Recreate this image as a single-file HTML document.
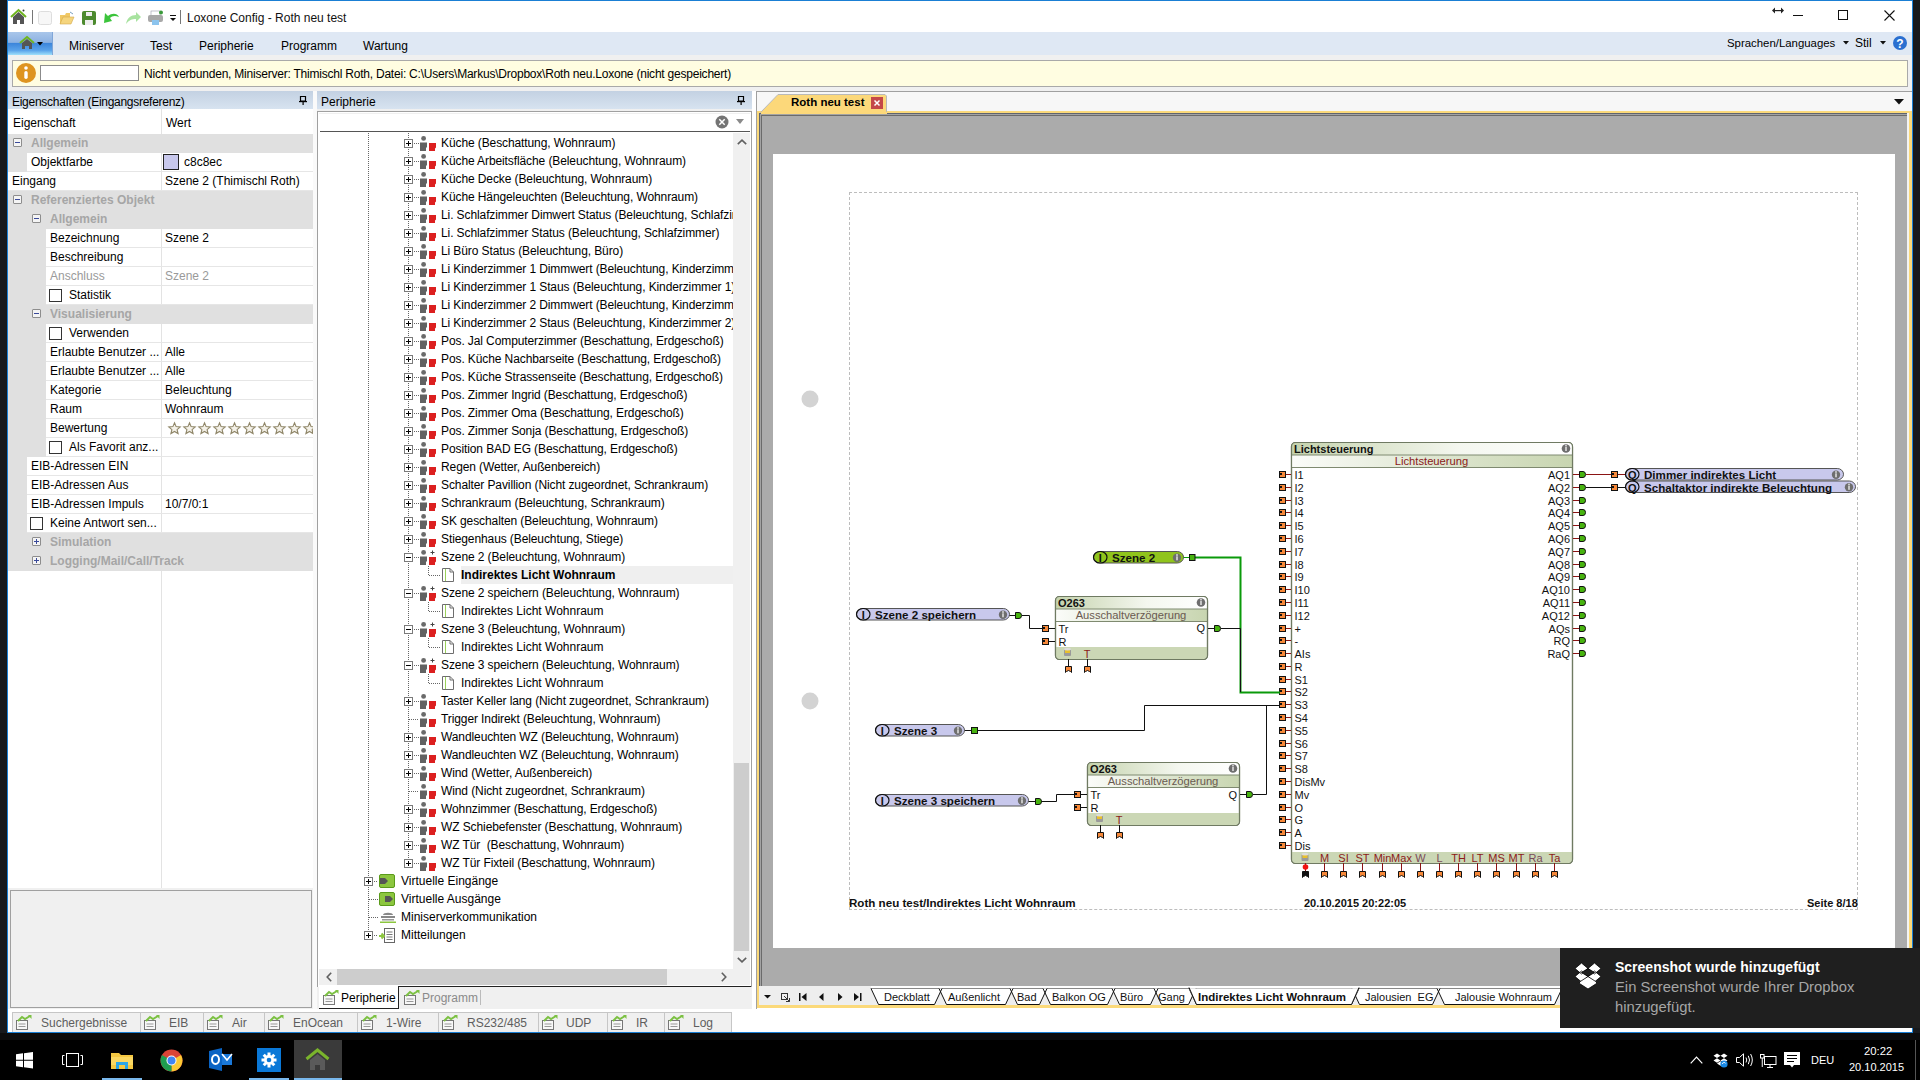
<!DOCTYPE html>
<html><head><meta charset="utf-8">
<style>
*{box-sizing:border-box;margin:0;padding:0}
html,body{width:1920px;height:1080px;overflow:hidden;background:#1c1c1c;font-family:"Liberation Sans",sans-serif;font-size:12px;color:#000}
.a{position:absolute}
.t{position:absolute;white-space:nowrap;line-height:14px}
svg{position:absolute;overflow:visible}
</style></head><body>
<!-- desktop strips -->
<div class="a" style="left:0;top:0;width:7px;height:1040px;background:#17191c"></div>
<div class="a" style="left:1913px;top:0;width:7px;height:1040px;background:#17191c"></div>
<!-- window bg -->
<div class="a" style="left:7px;top:0;width:1906px;height:1034px;background:#f0f0f0;border:1px solid #1a7fd4"></div>
<!-- title bar -->
<div class="a" style="left:8px;top:1px;width:1904px;height:31px;background:#fff"></div>
<!-- home icon -->
<svg style="left:10px;top:8px" width="17" height="17" viewBox="0 0 17 17"><path d="M1 9 L8.5 2 L16 9" fill="none" stroke="#6fb51f" stroke-width="2"/><path d="M3 9 L8.5 4 L14 9 V16 H10 V12 H7 V16 H3Z" fill="#555"/><circle cx="13.5" cy="2.5" r="1" fill="#333"/></svg>
<div class="a" style="left:32px;top:10px;width:1px;height:14px;background:#777"></div>
<svg style="left:38px;top:11px" width="14" height="14"><rect x="0.5" y="0.5" width="13" height="13" rx="2" fill="#f7f7f7" stroke="#ddd"/></svg>
<svg style="left:59px;top:11px" width="16" height="15"><path d="M1 4 H6 L7 2 H11 V13 H1Z" fill="#f0c865"/><path d="M1 13 L4 6 H15 L12 13Z" fill="#f5d57e" stroke="#d4a94a" stroke-width="0.6"/><path d="M11 1 L14 3" stroke="#7aa0c0" stroke-width="1"/></svg>
<svg style="left:82px;top:11px" width="14" height="14"><rect x="0" y="0" width="14" height="14" rx="2" fill="#4c8a2e"/><rect x="4" y="1" width="6" height="4" fill="#eee"/><rect x="3" y="9" width="8" height="5" fill="#eee"/></svg>
<svg style="left:103px;top:12px" width="17" height="12"><path d="M1 11 L2 1 L5 4 C9 1 14 1 16 5 C12 3 9 4 7 6 L9 9Z" fill="#3cc43c"/></svg>
<svg style="left:125px;top:11px" width="17" height="13"><path d="M1 13 C2 7 6 4 11 4 L11 1 L16 6 L11 11 L11 8 C7 8 4 9 1 13Z" fill="#a8e3a0"/></svg>
<svg style="left:148px;top:10px" width="16" height="16"><rect x="3" y="1" width="9" height="5" fill="#fff" stroke="#99a" stroke-width="0.6"/><rect x="0" y="5" width="15" height="7" rx="2" fill="#a8a8a8"/><rect x="4" y="10" width="7" height="5" fill="#8cc4ee"/><circle cx="13" cy="2.5" r="2" fill="#3a9a3a"/></svg>
<svg style="left:170px;top:15px" width="6" height="7"><rect x="0" y="0" width="6" height="1" fill="#111"/><path d="M0 3 H6 L3 6Z" fill="#111"/></svg>
<div class="a" style="left:180px;top:10px;width:1px;height:14px;background:#777"></div>
<div class="t" style="left:187px;top:11px;font-size:12px;color:#111">Loxone Config - Roth neu test</div>
<!-- window controls -->
<svg style="left:1772px;top:7px" width="12" height="7"><path d="M0 3.5 L3 0.5 V6.5Z M12 3.5 L9 0.5 V6.5Z" fill="#222"/><rect x="2" y="3" width="8" height="1.2" fill="#222"/></svg>
<div class="a" style="left:1793px;top:15px;width:10px;height:1px;background:#111"></div>
<div class="a" style="left:1838px;top:10px;width:10px;height:10px;border:1px solid #111"></div>
<svg style="left:1884px;top:10px" width="11" height="11"><path d="M0.5 0.5 L10.5 10.5 M10.5 0.5 L0.5 10.5" stroke="#111" stroke-width="1.1"/></svg>

<!-- ribbon bar -->
<div class="a" style="left:8px;top:32px;width:1904px;height:23px;background:#dfe8f4"></div>
<div class="a" style="left:8px;top:32px;width:45px;height:23px;background:linear-gradient(#a9c6ea 0%,#8db2e2 45%,#3d86db 50%,#5aa3ea 80%,#9fe0fb 100%);border-right:1px solid #7fa6d8"></div>
<svg style="left:19px;top:36px" width="16" height="14" viewBox="0 0 16 14"><path d="M1 7 L8 1 L15 7" fill="none" stroke="#6fb51f" stroke-width="2"/><path d="M3 7 L8 3 L13 7 V13 H10 V10 H6 V13 H3Z" fill="#555"/></svg>
<svg style="left:37px;top:42px" width="6" height="4"><path d="M0 0 H6 L3 3.5Z" fill="#000"/></svg>
<div class="t" style="left:69px;top:39px">Miniserver</div>
<div class="t" style="left:150px;top:39px">Test</div>
<div class="t" style="left:199px;top:39px">Peripherie</div>
<div class="t" style="left:281px;top:39px">Programm</div>
<div class="t" style="left:363px;top:39px">Wartung</div>
<div class="t" style="left:1727px;top:36px;font-size:11.4px">Sprachen/Languages</div>
<svg style="left:1843px;top:41px" width="6" height="4"><path d="M0 0 H6 L3 3.5Z" fill="#111"/></svg>
<div class="t" style="left:1855px;top:36px">Stil</div>
<svg style="left:1880px;top:41px" width="6" height="4"><path d="M0 0 H6 L3 3.5Z" fill="#111"/></svg>
<svg style="left:1893px;top:36px" width="14" height="14"><circle cx="7" cy="7" r="7" fill="#2a6fd0"/><text x="7" y="11.5" font-family="Liberation Sans" font-weight="bold" font-size="12" fill="#fff" text-anchor="middle">?</text></svg>

<!-- info bar -->
<div class="a" style="left:12px;top:60px;width:1896px;height:27px;background:#fffde1;border:1px solid #a9a9a9"></div>
<svg style="left:16px;top:63px" width="20" height="20"><circle cx="10" cy="10" r="10" fill="#de9420"/><circle cx="10" cy="5" r="1.8" fill="#fff"/><rect x="8.3" y="8" width="3.4" height="8" rx="1.7" fill="#fff"/></svg>
<div class="a" style="left:40px;top:65px;width:99px;height:16px;background:#fff;border:1px solid #8b8b8b"></div>
<div class="t" style="left:144px;top:67px;letter-spacing:-0.22px">Nicht verbunden, Miniserver: Thimischl Roth, Datei: C:\Users\Markus\Dropbox\Roth neu.Loxone (nicht gespeichert)</div>

<div class="a" style="left:8px;top:91px;width:305px;height:18px;background:linear-gradient(#c3d1e2,#d7e3f0)"></div>
<div class="t" style="left:12px;top:95px;letter-spacing:-0.28px">Eigenschaften (Eingangsreferenz)</div>
<svg style="left:299px;top:96px" width="8" height="9"><path d="M1.5 0.5 H6.5 V5 H1.5Z" fill="none" stroke="#000" stroke-width="1.2"/><rect x="0" y="5" width="8" height="1.2" fill="#000"/><rect x="3.5" y="6" width="1.2" height="3" fill="#000"/></svg>
<div class="a" style="left:8px;top:109px;width:305px;height:779px;background:#fff"></div>
<div class="a" style="left:161px;top:109px;width:1px;height:779px;background:#e3e3e3"></div>
<div class="t" style="left:13px;top:116px">Eigenschaft</div>
<div class="t" style="left:166px;top:116px">Wert</div>
<div class="a" style="left:8px;top:134px;width:305px;height:19px;background:#e0e0e0"></div>
<div class="a" style="left:13px;top:138px;width:9px;height:9px;border:1px solid #8d8d8d;border-radius:1px;background:#f4f4f4"></div>
<div class="a" style="left:15px;top:142px;width:5px;height:1px;background:#3a4a9a"></div>
<div class="t" style="left:31px;top:136px;color:#a6a6a6;font-weight:bold">Allgemein</div>
<div class="a" style="left:8px;top:153px;width:19px;height:19px;background:#e0e0e0"></div>
<div class="a" style="left:27px;top:171px;width:286px;height:1px;background:#e6e6e6"></div>
<div class="t" style="left:31px;top:155px;color:#000">Objektfarbe</div>
<div class="a" style="left:163px;top:154px;width:16px;height:16px;border:1px solid #222;background:#c8c8ec"></div>
<div class="t" style="left:184px;top:155px">c8c8ec</div>
<div class="a" style="left:8px;top:190px;width:305px;height:1px;background:#e6e6e6"></div>
<div class="t" style="left:12px;top:174px;color:#000">Eingang</div>
<div class="t" style="left:165px;top:174px;color:#000">Szene 2 (Thimischl Roth)</div>
<div class="a" style="left:8px;top:191px;width:305px;height:19px;background:#e0e0e0"></div>
<div class="a" style="left:13px;top:195px;width:9px;height:9px;border:1px solid #8d8d8d;border-radius:1px;background:#f4f4f4"></div>
<div class="a" style="left:15px;top:199px;width:5px;height:1px;background:#3a4a9a"></div>
<div class="t" style="left:31px;top:193px;color:#a6a6a6;font-weight:bold">Referenziertes Objekt</div>
<div class="a" style="left:8px;top:210px;width:305px;height:19px;background:#e0e0e0"></div>
<div class="a" style="left:32px;top:214px;width:9px;height:9px;border:1px solid #8d8d8d;border-radius:1px;background:#f4f4f4"></div>
<div class="a" style="left:34px;top:218px;width:5px;height:1px;background:#3a4a9a"></div>
<div class="t" style="left:50px;top:212px;color:#a6a6a6;font-weight:bold">Allgemein</div>
<div class="a" style="left:8px;top:229px;width:38px;height:19px;background:#e0e0e0"></div>
<div class="a" style="left:46px;top:247px;width:267px;height:1px;background:#e6e6e6"></div>
<div class="t" style="left:50px;top:231px;color:#000">Bezeichnung</div>
<div class="t" style="left:165px;top:231px;color:#000">Szene 2</div>
<div class="a" style="left:8px;top:248px;width:38px;height:19px;background:#e0e0e0"></div>
<div class="a" style="left:46px;top:266px;width:267px;height:1px;background:#e6e6e6"></div>
<div class="t" style="left:50px;top:250px;color:#000">Beschreibung</div>
<div class="a" style="left:8px;top:267px;width:38px;height:19px;background:#e0e0e0"></div>
<div class="a" style="left:46px;top:285px;width:267px;height:1px;background:#e6e6e6"></div>
<div class="t" style="left:50px;top:269px;color:#9a9a9a">Anschluss</div>
<div class="t" style="left:165px;top:269px;color:#9a9a9a">Szene 2</div>
<div class="a" style="left:8px;top:286px;width:38px;height:19px;background:#e0e0e0"></div>
<div class="a" style="left:46px;top:304px;width:267px;height:1px;background:#e6e6e6"></div>
<div class="a" style="left:49px;top:289px;width:13px;height:13px;border:1px solid #333;background:#fff"></div>
<div class="t" style="left:69px;top:288px;color:#000">Statistik</div>
<div class="a" style="left:8px;top:305px;width:305px;height:19px;background:#e0e0e0"></div>
<div class="a" style="left:32px;top:309px;width:9px;height:9px;border:1px solid #8d8d8d;border-radius:1px;background:#f4f4f4"></div>
<div class="a" style="left:34px;top:313px;width:5px;height:1px;background:#3a4a9a"></div>
<div class="t" style="left:50px;top:307px;color:#a6a6a6;font-weight:bold">Visualisierung</div>
<div class="a" style="left:8px;top:324px;width:38px;height:19px;background:#e0e0e0"></div>
<div class="a" style="left:46px;top:342px;width:267px;height:1px;background:#e6e6e6"></div>
<div class="a" style="left:49px;top:327px;width:13px;height:13px;border:1px solid #333;background:#fff"></div>
<div class="t" style="left:69px;top:326px;color:#000">Verwenden</div>
<div class="a" style="left:8px;top:343px;width:38px;height:19px;background:#e0e0e0"></div>
<div class="a" style="left:46px;top:361px;width:267px;height:1px;background:#e6e6e6"></div>
<div class="t" style="left:50px;top:345px;color:#000">Erlaubte Benutzer ...</div>
<div class="t" style="left:165px;top:345px;color:#000">Alle</div>
<div class="a" style="left:8px;top:362px;width:38px;height:19px;background:#e0e0e0"></div>
<div class="a" style="left:46px;top:380px;width:267px;height:1px;background:#e6e6e6"></div>
<div class="t" style="left:50px;top:364px;color:#000">Erlaubte Benutzer ...</div>
<div class="t" style="left:165px;top:364px;color:#000">Alle</div>
<div class="a" style="left:8px;top:381px;width:38px;height:19px;background:#e0e0e0"></div>
<div class="a" style="left:46px;top:399px;width:267px;height:1px;background:#e6e6e6"></div>
<div class="t" style="left:50px;top:383px;color:#000">Kategorie</div>
<div class="t" style="left:165px;top:383px;color:#000">Beleuchtung</div>
<div class="a" style="left:8px;top:400px;width:38px;height:19px;background:#e0e0e0"></div>
<div class="a" style="left:46px;top:418px;width:267px;height:1px;background:#e6e6e6"></div>
<div class="t" style="left:50px;top:402px;color:#000">Raum</div>
<div class="t" style="left:165px;top:402px;color:#000">Wohnraum</div>
<div class="a" style="left:8px;top:419px;width:38px;height:19px;background:#e0e0e0"></div>
<div class="a" style="left:46px;top:437px;width:267px;height:1px;background:#e6e6e6"></div>
<div class="t" style="left:50px;top:421px;color:#000">Bewertung</div>
<svg style="left:168px;top:422px" width="13" height="13" viewBox="0 0 13 13"><path d="M6.5 0.8 L8.1 4.6 L12.2 4.9 L9.1 7.6 L10.1 11.6 L6.5 9.5 L2.9 11.6 L3.9 7.6 L0.8 4.9 L4.9 4.6Z" fill="#f4f1e8" stroke="#8f8668" stroke-width="1.1"/></svg>
<svg style="left:183px;top:422px" width="13" height="13" viewBox="0 0 13 13"><path d="M6.5 0.8 L8.1 4.6 L12.2 4.9 L9.1 7.6 L10.1 11.6 L6.5 9.5 L2.9 11.6 L3.9 7.6 L0.8 4.9 L4.9 4.6Z" fill="#f4f1e8" stroke="#8f8668" stroke-width="1.1"/></svg>
<svg style="left:198px;top:422px" width="13" height="13" viewBox="0 0 13 13"><path d="M6.5 0.8 L8.1 4.6 L12.2 4.9 L9.1 7.6 L10.1 11.6 L6.5 9.5 L2.9 11.6 L3.9 7.6 L0.8 4.9 L4.9 4.6Z" fill="#f4f1e8" stroke="#8f8668" stroke-width="1.1"/></svg>
<svg style="left:213px;top:422px" width="13" height="13" viewBox="0 0 13 13"><path d="M6.5 0.8 L8.1 4.6 L12.2 4.9 L9.1 7.6 L10.1 11.6 L6.5 9.5 L2.9 11.6 L3.9 7.6 L0.8 4.9 L4.9 4.6Z" fill="#f4f1e8" stroke="#8f8668" stroke-width="1.1"/></svg>
<svg style="left:228px;top:422px" width="13" height="13" viewBox="0 0 13 13"><path d="M6.5 0.8 L8.1 4.6 L12.2 4.9 L9.1 7.6 L10.1 11.6 L6.5 9.5 L2.9 11.6 L3.9 7.6 L0.8 4.9 L4.9 4.6Z" fill="#f4f1e8" stroke="#8f8668" stroke-width="1.1"/></svg>
<svg style="left:243px;top:422px" width="13" height="13" viewBox="0 0 13 13"><path d="M6.5 0.8 L8.1 4.6 L12.2 4.9 L9.1 7.6 L10.1 11.6 L6.5 9.5 L2.9 11.6 L3.9 7.6 L0.8 4.9 L4.9 4.6Z" fill="#f4f1e8" stroke="#8f8668" stroke-width="1.1"/></svg>
<svg style="left:258px;top:422px" width="13" height="13" viewBox="0 0 13 13"><path d="M6.5 0.8 L8.1 4.6 L12.2 4.9 L9.1 7.6 L10.1 11.6 L6.5 9.5 L2.9 11.6 L3.9 7.6 L0.8 4.9 L4.9 4.6Z" fill="#f4f1e8" stroke="#8f8668" stroke-width="1.1"/></svg>
<svg style="left:273px;top:422px" width="13" height="13" viewBox="0 0 13 13"><path d="M6.5 0.8 L8.1 4.6 L12.2 4.9 L9.1 7.6 L10.1 11.6 L6.5 9.5 L2.9 11.6 L3.9 7.6 L0.8 4.9 L4.9 4.6Z" fill="#f4f1e8" stroke="#8f8668" stroke-width="1.1"/></svg>
<svg style="left:288px;top:422px" width="13" height="13" viewBox="0 0 13 13"><path d="M6.5 0.8 L8.1 4.6 L12.2 4.9 L9.1 7.6 L10.1 11.6 L6.5 9.5 L2.9 11.6 L3.9 7.6 L0.8 4.9 L4.9 4.6Z" fill="#f4f1e8" stroke="#8f8668" stroke-width="1.1"/></svg>
<svg style="left:303px;top:422px" width="13" height="13" viewBox="0 0 13 13"><path d="M6.5 0.8 L8.1 4.6 L12.2 4.9 L9.1 7.6 L10.1 11.6 L6.5 9.5 L2.9 11.6 L3.9 7.6 L0.8 4.9 L4.9 4.6Z" fill="#f4f1e8" stroke="#8f8668" stroke-width="1.1"/></svg>
<div class="a" style="left:8px;top:438px;width:38px;height:19px;background:#e0e0e0"></div>
<div class="a" style="left:46px;top:456px;width:267px;height:1px;background:#e6e6e6"></div>
<div class="a" style="left:49px;top:441px;width:13px;height:13px;border:1px solid #333;background:#fff"></div>
<div class="t" style="left:69px;top:440px;color:#000">Als Favorit anz...</div>
<div class="a" style="left:8px;top:457px;width:19px;height:19px;background:#e0e0e0"></div>
<div class="a" style="left:27px;top:475px;width:286px;height:1px;background:#e6e6e6"></div>
<div class="t" style="left:31px;top:459px;color:#000">EIB-Adressen EIN</div>
<div class="a" style="left:8px;top:476px;width:19px;height:19px;background:#e0e0e0"></div>
<div class="a" style="left:27px;top:494px;width:286px;height:1px;background:#e6e6e6"></div>
<div class="t" style="left:31px;top:478px;color:#000">EIB-Adressen Aus</div>
<div class="a" style="left:8px;top:495px;width:19px;height:19px;background:#e0e0e0"></div>
<div class="a" style="left:27px;top:513px;width:286px;height:1px;background:#e6e6e6"></div>
<div class="t" style="left:31px;top:497px;color:#000">EIB-Adressen Impuls</div>
<div class="t" style="left:165px;top:497px;color:#000">10/7/0:1</div>
<div class="a" style="left:8px;top:514px;width:19px;height:19px;background:#e0e0e0"></div>
<div class="a" style="left:27px;top:532px;width:286px;height:1px;background:#e6e6e6"></div>
<div class="a" style="left:30px;top:517px;width:13px;height:13px;border:1px solid #333;background:#fff"></div>
<div class="t" style="left:50px;top:516px;color:#000">Keine Antwort sen...</div>
<div class="a" style="left:8px;top:533px;width:305px;height:19px;background:#e0e0e0"></div>
<div class="a" style="left:32px;top:537px;width:9px;height:9px;border:1px solid #8d8d8d;border-radius:1px;background:#f4f4f4"></div>
<div class="a" style="left:34px;top:541px;width:5px;height:1px;background:#3a4a9a"></div>
<div class="a" style="left:36px;top:539px;width:1px;height:5px;background:#3a4a9a"></div>
<div class="t" style="left:50px;top:535px;color:#a6a6a6;font-weight:bold">Simulation</div>
<div class="a" style="left:8px;top:552px;width:305px;height:19px;background:#e0e0e0"></div>
<div class="a" style="left:32px;top:556px;width:9px;height:9px;border:1px solid #8d8d8d;border-radius:1px;background:#f4f4f4"></div>
<div class="a" style="left:34px;top:560px;width:5px;height:1px;background:#3a4a9a"></div>
<div class="a" style="left:36px;top:558px;width:1px;height:5px;background:#3a4a9a"></div>
<div class="t" style="left:50px;top:554px;color:#a6a6a6;font-weight:bold">Logging/Mail/Call/Track</div>
<div class="a" style="left:313px;top:91px;width:4px;height:920px;background:#fafafa"></div>
<div class="a" style="left:10px;top:890px;width:302px;height:118px;background:#f0f0f0;border:1px solid #a0a0a0"></div>
<div class="a" style="left:317px;top:91px;width:435px;height:18px;background:linear-gradient(#c3d1e2,#d7e3f0)"></div>
<div class="t" style="left:321px;top:95px">Peripherie</div>
<svg style="left:737px;top:96px" width="8" height="9"><path d="M1.5 0.5 H6.5 V5 H1.5Z" fill="none" stroke="#000" stroke-width="1.2"/><rect x="0" y="5" width="8" height="1.2" fill="#000"/><rect x="3.5" y="6" width="1.2" height="3" fill="#000"/></svg>
<div class="a" style="left:317px;top:111px;width:435px;height:876px;background:#fff;border:1px solid #a0a0a0;border-bottom:none"></div>
<div class="a" style="left:319px;top:113px;width:431px;height:19px;background:#fff;border-top:1px solid #f0f0f0"></div>
<div class="a" style="left:320px;top:131px;width:430px;height:1px;background:#555"></div>
<svg style="left:715px;top:115px" width="14" height="14"><circle cx="7" cy="7" r="6.5" fill="#747474"/><path d="M4.3 4.3 L9.7 9.7 M9.7 4.3 L4.3 9.7" stroke="#fff" stroke-width="1.5"/></svg>
<svg style="left:736px;top:119px" width="8" height="6"><path d="M0 0 H8 L4 5Z" fill="#8a8a8a"/></svg>
<div class="a" style="left:319px;top:133px;width:414px;height:835px;overflow:hidden">
<div class="a" style="left:49px;top:0px;width:1px;height:802px;background:repeating-linear-gradient(#666 0 1px,transparent 1px 2px)"></div>
<div class="a" style="left:89px;top:0px;width:1px;height:729px;background:repeating-linear-gradient(#666 0 1px,transparent 1px 2px)"></div>
<div class="a" style="left:95px;top:10px;width:5px;height:1px;background:repeating-linear-gradient(90deg,#666 0 1px,transparent 1px 2px)"></div>
<div class="a" style="left:85px;top:6px;width:9px;height:9px;border:1px solid #7a7a7a;background:#fff"></div><div class="a" style="left:87px;top:10px;width:5px;height:1px;background:#000"></div><div class="a" style="left:89px;top:8px;width:1px;height:5px;background:#000"></div>
<svg style="left:101px;top:3px" width="17" height="16"><circle cx="3.6" cy="2.4" r="2.4" fill="#6a6a6a"/><path d="M0 6.5 H7 V11 L6 12 V15 H0Z" fill="#626262"/><path d="M9 7 H16 V11.5 L15 12.5 V15 H9Z" fill="#dc1f1f"/></svg>
<div class="t" style="left:122px;top:3px;letter-spacing:-0.1px">Küche (Beschattung, Wohnraum)</div>
<div class="a" style="left:95px;top:28px;width:5px;height:1px;background:repeating-linear-gradient(90deg,#666 0 1px,transparent 1px 2px)"></div>
<div class="a" style="left:85px;top:24px;width:9px;height:9px;border:1px solid #7a7a7a;background:#fff"></div><div class="a" style="left:87px;top:28px;width:5px;height:1px;background:#000"></div><div class="a" style="left:89px;top:26px;width:1px;height:5px;background:#000"></div>
<svg style="left:101px;top:21px" width="17" height="16"><circle cx="3.6" cy="2.4" r="2.4" fill="#6a6a6a"/><path d="M0 6.5 H7 V11 L6 12 V15 H0Z" fill="#626262"/><path d="M9 7 H16 V11.5 L15 12.5 V15 H9Z" fill="#dc1f1f"/></svg>
<div class="t" style="left:122px;top:21px;letter-spacing:-0.1px">Küche Arbeitsfläche (Beleuchtung, Wohnraum)</div>
<div class="a" style="left:95px;top:46px;width:5px;height:1px;background:repeating-linear-gradient(90deg,#666 0 1px,transparent 1px 2px)"></div>
<div class="a" style="left:85px;top:42px;width:9px;height:9px;border:1px solid #7a7a7a;background:#fff"></div><div class="a" style="left:87px;top:46px;width:5px;height:1px;background:#000"></div><div class="a" style="left:89px;top:44px;width:1px;height:5px;background:#000"></div>
<svg style="left:101px;top:39px" width="17" height="16"><circle cx="3.6" cy="2.4" r="2.4" fill="#6a6a6a"/><path d="M0 6.5 H7 V11 L6 12 V15 H0Z" fill="#626262"/><path d="M9 7 H16 V11.5 L15 12.5 V15 H9Z" fill="#dc1f1f"/></svg>
<div class="t" style="left:122px;top:39px;letter-spacing:-0.1px">Küche Decke (Beleuchtung, Wohnraum)</div>
<div class="a" style="left:95px;top:64px;width:5px;height:1px;background:repeating-linear-gradient(90deg,#666 0 1px,transparent 1px 2px)"></div>
<div class="a" style="left:85px;top:60px;width:9px;height:9px;border:1px solid #7a7a7a;background:#fff"></div><div class="a" style="left:87px;top:64px;width:5px;height:1px;background:#000"></div><div class="a" style="left:89px;top:62px;width:1px;height:5px;background:#000"></div>
<svg style="left:101px;top:57px" width="17" height="16"><circle cx="3.6" cy="2.4" r="2.4" fill="#6a6a6a"/><path d="M0 6.5 H7 V11 L6 12 V15 H0Z" fill="#626262"/><path d="M9 7 H16 V11.5 L15 12.5 V15 H9Z" fill="#dc1f1f"/></svg>
<div class="t" style="left:122px;top:57px;letter-spacing:-0.1px">Küche Hängeleuchten (Beleuchtung, Wohnraum)</div>
<div class="a" style="left:95px;top:82px;width:5px;height:1px;background:repeating-linear-gradient(90deg,#666 0 1px,transparent 1px 2px)"></div>
<div class="a" style="left:85px;top:78px;width:9px;height:9px;border:1px solid #7a7a7a;background:#fff"></div><div class="a" style="left:87px;top:82px;width:5px;height:1px;background:#000"></div><div class="a" style="left:89px;top:80px;width:1px;height:5px;background:#000"></div>
<svg style="left:101px;top:75px" width="17" height="16"><circle cx="3.6" cy="2.4" r="2.4" fill="#6a6a6a"/><path d="M0 6.5 H7 V11 L6 12 V15 H0Z" fill="#626262"/><path d="M9 7 H16 V11.5 L15 12.5 V15 H9Z" fill="#dc1f1f"/></svg>
<div class="t" style="left:122px;top:75px;letter-spacing:-0.1px">Li. Schlafzimmer Dimwert Status (Beleuchtung, Schlafzimmer)</div>
<div class="a" style="left:95px;top:100px;width:5px;height:1px;background:repeating-linear-gradient(90deg,#666 0 1px,transparent 1px 2px)"></div>
<div class="a" style="left:85px;top:96px;width:9px;height:9px;border:1px solid #7a7a7a;background:#fff"></div><div class="a" style="left:87px;top:100px;width:5px;height:1px;background:#000"></div><div class="a" style="left:89px;top:98px;width:1px;height:5px;background:#000"></div>
<svg style="left:101px;top:93px" width="17" height="16"><circle cx="3.6" cy="2.4" r="2.4" fill="#6a6a6a"/><path d="M0 6.5 H7 V11 L6 12 V15 H0Z" fill="#626262"/><path d="M9 7 H16 V11.5 L15 12.5 V15 H9Z" fill="#dc1f1f"/></svg>
<div class="t" style="left:122px;top:93px;letter-spacing:-0.1px">Li. Schlafzimmer Status (Beleuchtung, Schlafzimmer)</div>
<div class="a" style="left:95px;top:118px;width:5px;height:1px;background:repeating-linear-gradient(90deg,#666 0 1px,transparent 1px 2px)"></div>
<div class="a" style="left:85px;top:114px;width:9px;height:9px;border:1px solid #7a7a7a;background:#fff"></div><div class="a" style="left:87px;top:118px;width:5px;height:1px;background:#000"></div><div class="a" style="left:89px;top:116px;width:1px;height:5px;background:#000"></div>
<svg style="left:101px;top:111px" width="17" height="16"><circle cx="3.6" cy="2.4" r="2.4" fill="#6a6a6a"/><path d="M0 6.5 H7 V11 L6 12 V15 H0Z" fill="#626262"/><path d="M9 7 H16 V11.5 L15 12.5 V15 H9Z" fill="#dc1f1f"/></svg>
<div class="t" style="left:122px;top:111px;letter-spacing:-0.1px">Li Büro Status (Beleuchtung, Büro)</div>
<div class="a" style="left:95px;top:136px;width:5px;height:1px;background:repeating-linear-gradient(90deg,#666 0 1px,transparent 1px 2px)"></div>
<div class="a" style="left:85px;top:132px;width:9px;height:9px;border:1px solid #7a7a7a;background:#fff"></div><div class="a" style="left:87px;top:136px;width:5px;height:1px;background:#000"></div><div class="a" style="left:89px;top:134px;width:1px;height:5px;background:#000"></div>
<svg style="left:101px;top:129px" width="17" height="16"><circle cx="3.6" cy="2.4" r="2.4" fill="#6a6a6a"/><path d="M0 6.5 H7 V11 L6 12 V15 H0Z" fill="#626262"/><path d="M9 7 H16 V11.5 L15 12.5 V15 H9Z" fill="#dc1f1f"/></svg>
<div class="t" style="left:122px;top:129px;letter-spacing:-0.1px">Li Kinderzimmer 1 Dimmwert (Beleuchtung, Kinderzimmer 1)</div>
<div class="a" style="left:95px;top:154px;width:5px;height:1px;background:repeating-linear-gradient(90deg,#666 0 1px,transparent 1px 2px)"></div>
<div class="a" style="left:85px;top:150px;width:9px;height:9px;border:1px solid #7a7a7a;background:#fff"></div><div class="a" style="left:87px;top:154px;width:5px;height:1px;background:#000"></div><div class="a" style="left:89px;top:152px;width:1px;height:5px;background:#000"></div>
<svg style="left:101px;top:147px" width="17" height="16"><circle cx="3.6" cy="2.4" r="2.4" fill="#6a6a6a"/><path d="M0 6.5 H7 V11 L6 12 V15 H0Z" fill="#626262"/><path d="M9 7 H16 V11.5 L15 12.5 V15 H9Z" fill="#dc1f1f"/></svg>
<div class="t" style="left:122px;top:147px;letter-spacing:-0.1px">Li Kinderzimmer 1 Staus (Beleuchtung, Kinderzimmer 1)</div>
<div class="a" style="left:95px;top:172px;width:5px;height:1px;background:repeating-linear-gradient(90deg,#666 0 1px,transparent 1px 2px)"></div>
<div class="a" style="left:85px;top:168px;width:9px;height:9px;border:1px solid #7a7a7a;background:#fff"></div><div class="a" style="left:87px;top:172px;width:5px;height:1px;background:#000"></div><div class="a" style="left:89px;top:170px;width:1px;height:5px;background:#000"></div>
<svg style="left:101px;top:165px" width="17" height="16"><circle cx="3.6" cy="2.4" r="2.4" fill="#6a6a6a"/><path d="M0 6.5 H7 V11 L6 12 V15 H0Z" fill="#626262"/><path d="M9 7 H16 V11.5 L15 12.5 V15 H9Z" fill="#dc1f1f"/></svg>
<div class="t" style="left:122px;top:165px;letter-spacing:-0.1px">Li Kinderzimmer 2 Dimmwert (Beleuchtung, Kinderzimmer 2)</div>
<div class="a" style="left:95px;top:190px;width:5px;height:1px;background:repeating-linear-gradient(90deg,#666 0 1px,transparent 1px 2px)"></div>
<div class="a" style="left:85px;top:186px;width:9px;height:9px;border:1px solid #7a7a7a;background:#fff"></div><div class="a" style="left:87px;top:190px;width:5px;height:1px;background:#000"></div><div class="a" style="left:89px;top:188px;width:1px;height:5px;background:#000"></div>
<svg style="left:101px;top:183px" width="17" height="16"><circle cx="3.6" cy="2.4" r="2.4" fill="#6a6a6a"/><path d="M0 6.5 H7 V11 L6 12 V15 H0Z" fill="#626262"/><path d="M9 7 H16 V11.5 L15 12.5 V15 H9Z" fill="#dc1f1f"/></svg>
<div class="t" style="left:122px;top:183px;letter-spacing:-0.1px">Li Kinderzimmer 2 Staus (Beleuchtung, Kinderzimmer 2)</div>
<div class="a" style="left:95px;top:208px;width:5px;height:1px;background:repeating-linear-gradient(90deg,#666 0 1px,transparent 1px 2px)"></div>
<div class="a" style="left:85px;top:204px;width:9px;height:9px;border:1px solid #7a7a7a;background:#fff"></div><div class="a" style="left:87px;top:208px;width:5px;height:1px;background:#000"></div><div class="a" style="left:89px;top:206px;width:1px;height:5px;background:#000"></div>
<svg style="left:101px;top:201px" width="17" height="16"><circle cx="3.6" cy="2.4" r="2.4" fill="#6a6a6a"/><path d="M0 6.5 H7 V11 L6 12 V15 H0Z" fill="#626262"/><path d="M9 7 H16 V11.5 L15 12.5 V15 H9Z" fill="#dc1f1f"/></svg>
<div class="t" style="left:122px;top:201px;letter-spacing:-0.1px">Pos. Jal Computerzimmer (Beschattung, Erdgeschoß)</div>
<div class="a" style="left:95px;top:226px;width:5px;height:1px;background:repeating-linear-gradient(90deg,#666 0 1px,transparent 1px 2px)"></div>
<div class="a" style="left:85px;top:222px;width:9px;height:9px;border:1px solid #7a7a7a;background:#fff"></div><div class="a" style="left:87px;top:226px;width:5px;height:1px;background:#000"></div><div class="a" style="left:89px;top:224px;width:1px;height:5px;background:#000"></div>
<svg style="left:101px;top:219px" width="17" height="16"><circle cx="3.6" cy="2.4" r="2.4" fill="#6a6a6a"/><path d="M0 6.5 H7 V11 L6 12 V15 H0Z" fill="#626262"/><path d="M9 7 H16 V11.5 L15 12.5 V15 H9Z" fill="#dc1f1f"/></svg>
<div class="t" style="left:122px;top:219px;letter-spacing:-0.1px">Pos. Küche Nachbarseite (Beschattung, Erdgeschoß)</div>
<div class="a" style="left:95px;top:244px;width:5px;height:1px;background:repeating-linear-gradient(90deg,#666 0 1px,transparent 1px 2px)"></div>
<div class="a" style="left:85px;top:240px;width:9px;height:9px;border:1px solid #7a7a7a;background:#fff"></div><div class="a" style="left:87px;top:244px;width:5px;height:1px;background:#000"></div><div class="a" style="left:89px;top:242px;width:1px;height:5px;background:#000"></div>
<svg style="left:101px;top:237px" width="17" height="16"><circle cx="3.6" cy="2.4" r="2.4" fill="#6a6a6a"/><path d="M0 6.5 H7 V11 L6 12 V15 H0Z" fill="#626262"/><path d="M9 7 H16 V11.5 L15 12.5 V15 H9Z" fill="#dc1f1f"/></svg>
<div class="t" style="left:122px;top:237px;letter-spacing:-0.1px">Pos. Küche Strassenseite (Beschattung, Erdgeschoß)</div>
<div class="a" style="left:95px;top:262px;width:5px;height:1px;background:repeating-linear-gradient(90deg,#666 0 1px,transparent 1px 2px)"></div>
<div class="a" style="left:85px;top:258px;width:9px;height:9px;border:1px solid #7a7a7a;background:#fff"></div><div class="a" style="left:87px;top:262px;width:5px;height:1px;background:#000"></div><div class="a" style="left:89px;top:260px;width:1px;height:5px;background:#000"></div>
<svg style="left:101px;top:255px" width="17" height="16"><circle cx="3.6" cy="2.4" r="2.4" fill="#6a6a6a"/><path d="M0 6.5 H7 V11 L6 12 V15 H0Z" fill="#626262"/><path d="M9 7 H16 V11.5 L15 12.5 V15 H9Z" fill="#dc1f1f"/></svg>
<div class="t" style="left:122px;top:255px;letter-spacing:-0.1px">Pos. Zimmer Ingrid (Beschattung, Erdgeschoß)</div>
<div class="a" style="left:95px;top:280px;width:5px;height:1px;background:repeating-linear-gradient(90deg,#666 0 1px,transparent 1px 2px)"></div>
<div class="a" style="left:85px;top:276px;width:9px;height:9px;border:1px solid #7a7a7a;background:#fff"></div><div class="a" style="left:87px;top:280px;width:5px;height:1px;background:#000"></div><div class="a" style="left:89px;top:278px;width:1px;height:5px;background:#000"></div>
<svg style="left:101px;top:273px" width="17" height="16"><circle cx="3.6" cy="2.4" r="2.4" fill="#6a6a6a"/><path d="M0 6.5 H7 V11 L6 12 V15 H0Z" fill="#626262"/><path d="M9 7 H16 V11.5 L15 12.5 V15 H9Z" fill="#dc1f1f"/></svg>
<div class="t" style="left:122px;top:273px;letter-spacing:-0.1px">Pos. Zimmer Oma (Beschattung, Erdgeschoß)</div>
<div class="a" style="left:95px;top:298px;width:5px;height:1px;background:repeating-linear-gradient(90deg,#666 0 1px,transparent 1px 2px)"></div>
<div class="a" style="left:85px;top:294px;width:9px;height:9px;border:1px solid #7a7a7a;background:#fff"></div><div class="a" style="left:87px;top:298px;width:5px;height:1px;background:#000"></div><div class="a" style="left:89px;top:296px;width:1px;height:5px;background:#000"></div>
<svg style="left:101px;top:291px" width="17" height="16"><circle cx="3.6" cy="2.4" r="2.4" fill="#6a6a6a"/><path d="M0 6.5 H7 V11 L6 12 V15 H0Z" fill="#626262"/><path d="M9 7 H16 V11.5 L15 12.5 V15 H9Z" fill="#dc1f1f"/></svg>
<div class="t" style="left:122px;top:291px;letter-spacing:-0.1px">Pos. Zimmer Sonja (Beschattung, Erdgeschoß)</div>
<div class="a" style="left:95px;top:316px;width:5px;height:1px;background:repeating-linear-gradient(90deg,#666 0 1px,transparent 1px 2px)"></div>
<div class="a" style="left:85px;top:312px;width:9px;height:9px;border:1px solid #7a7a7a;background:#fff"></div><div class="a" style="left:87px;top:316px;width:5px;height:1px;background:#000"></div><div class="a" style="left:89px;top:314px;width:1px;height:5px;background:#000"></div>
<svg style="left:101px;top:309px" width="17" height="16"><circle cx="3.6" cy="2.4" r="2.4" fill="#6a6a6a"/><path d="M0 6.5 H7 V11 L6 12 V15 H0Z" fill="#626262"/><path d="M9 7 H16 V11.5 L15 12.5 V15 H9Z" fill="#dc1f1f"/></svg>
<div class="t" style="left:122px;top:309px;letter-spacing:-0.1px">Position BAD EG (Beschattung, Erdgeschoß)</div>
<div class="a" style="left:95px;top:334px;width:5px;height:1px;background:repeating-linear-gradient(90deg,#666 0 1px,transparent 1px 2px)"></div>
<div class="a" style="left:85px;top:330px;width:9px;height:9px;border:1px solid #7a7a7a;background:#fff"></div><div class="a" style="left:87px;top:334px;width:5px;height:1px;background:#000"></div><div class="a" style="left:89px;top:332px;width:1px;height:5px;background:#000"></div>
<svg style="left:101px;top:327px" width="17" height="16"><circle cx="3.6" cy="2.4" r="2.4" fill="#6a6a6a"/><path d="M0 6.5 H7 V11 L6 12 V15 H0Z" fill="#626262"/><path d="M9 7 H16 V11.5 L15 12.5 V15 H9Z" fill="#dc1f1f"/></svg>
<div class="t" style="left:122px;top:327px;letter-spacing:-0.1px">Regen (Wetter, Außenbereich)</div>
<div class="a" style="left:95px;top:352px;width:5px;height:1px;background:repeating-linear-gradient(90deg,#666 0 1px,transparent 1px 2px)"></div>
<div class="a" style="left:85px;top:348px;width:9px;height:9px;border:1px solid #7a7a7a;background:#fff"></div><div class="a" style="left:87px;top:352px;width:5px;height:1px;background:#000"></div><div class="a" style="left:89px;top:350px;width:1px;height:5px;background:#000"></div>
<svg style="left:101px;top:345px" width="17" height="16"><circle cx="3.6" cy="2.4" r="2.4" fill="#6a6a6a"/><path d="M0 6.5 H7 V11 L6 12 V15 H0Z" fill="#626262"/><path d="M9 7 H16 V11.5 L15 12.5 V15 H9Z" fill="#dc1f1f"/></svg>
<div class="t" style="left:122px;top:345px;letter-spacing:-0.1px">Schalter Pavillion (Nicht zugeordnet, Schrankraum)</div>
<div class="a" style="left:95px;top:370px;width:5px;height:1px;background:repeating-linear-gradient(90deg,#666 0 1px,transparent 1px 2px)"></div>
<div class="a" style="left:85px;top:366px;width:9px;height:9px;border:1px solid #7a7a7a;background:#fff"></div><div class="a" style="left:87px;top:370px;width:5px;height:1px;background:#000"></div><div class="a" style="left:89px;top:368px;width:1px;height:5px;background:#000"></div>
<svg style="left:101px;top:363px" width="17" height="16"><circle cx="3.6" cy="2.4" r="2.4" fill="#6a6a6a"/><path d="M0 6.5 H7 V11 L6 12 V15 H0Z" fill="#626262"/><path d="M9 7 H16 V11.5 L15 12.5 V15 H9Z" fill="#dc1f1f"/></svg>
<div class="t" style="left:122px;top:363px;letter-spacing:-0.1px">Schrankraum (Beleuchtung, Schrankraum)</div>
<div class="a" style="left:95px;top:388px;width:5px;height:1px;background:repeating-linear-gradient(90deg,#666 0 1px,transparent 1px 2px)"></div>
<div class="a" style="left:85px;top:384px;width:9px;height:9px;border:1px solid #7a7a7a;background:#fff"></div><div class="a" style="left:87px;top:388px;width:5px;height:1px;background:#000"></div><div class="a" style="left:89px;top:386px;width:1px;height:5px;background:#000"></div>
<svg style="left:101px;top:381px" width="17" height="16"><circle cx="3.6" cy="2.4" r="2.4" fill="#6a6a6a"/><path d="M0 6.5 H7 V11 L6 12 V15 H0Z" fill="#626262"/><path d="M9 7 H16 V11.5 L15 12.5 V15 H9Z" fill="#dc1f1f"/></svg>
<div class="t" style="left:122px;top:381px;letter-spacing:-0.1px">SK geschalten (Beleuchtung, Wohnraum)</div>
<div class="a" style="left:95px;top:406px;width:5px;height:1px;background:repeating-linear-gradient(90deg,#666 0 1px,transparent 1px 2px)"></div>
<div class="a" style="left:85px;top:402px;width:9px;height:9px;border:1px solid #7a7a7a;background:#fff"></div><div class="a" style="left:87px;top:406px;width:5px;height:1px;background:#000"></div><div class="a" style="left:89px;top:404px;width:1px;height:5px;background:#000"></div>
<svg style="left:101px;top:399px" width="17" height="16"><circle cx="3.6" cy="2.4" r="2.4" fill="#6a6a6a"/><path d="M0 6.5 H7 V11 L6 12 V15 H0Z" fill="#626262"/><path d="M9 7 H16 V11.5 L15 12.5 V15 H9Z" fill="#dc1f1f"/></svg>
<div class="t" style="left:122px;top:399px;letter-spacing:-0.1px">Stiegenhaus (Beleuchtung, Stiege)</div>
<div class="a" style="left:95px;top:424px;width:5px;height:1px;background:repeating-linear-gradient(90deg,#666 0 1px,transparent 1px 2px)"></div>
<div class="a" style="left:85px;top:420px;width:9px;height:9px;border:1px solid #7a7a7a;background:#fff"></div><div class="a" style="left:87px;top:424px;width:5px;height:1px;background:#000"></div>
<svg style="left:101px;top:417px" width="17" height="16"><circle cx="3.6" cy="2.4" r="2.4" fill="#6a6a6a"/><path d="M0 6.5 H7 V11 L6 12 V15 H0Z" fill="#626262"/><path d="M9 7 H16 V11.5 L15 12.5 V15 H9Z" fill="#dc1f1f"/><path d="M12.5 0.5 V4.5 M10.5 2.5 H14.5" stroke="#444" stroke-width="1"/></svg>
<div class="t" style="left:122px;top:417px;letter-spacing:-0.1px">Szene 2 (Beleuchtung, Wohnraum)</div>
<div class="a" style="left:109px;top:433px;width:1px;height:9px;background:repeating-linear-gradient(#666 0 1px,transparent 1px 2px)"></div>
<div class="a" style="left:110px;top:442px;width:11px;height:1px;background:repeating-linear-gradient(90deg,#666 0 1px,transparent 1px 2px)"></div>
<svg style="left:123px;top:435px" width="12" height="14"><path d="M0.5 0.5 H8 L11.5 4 V13.5 H0.5Z" fill="#fff" stroke="#6e6e6e"/><path d="M8 0.5 V4 H11.5" fill="none" stroke="#6e6e6e"/><rect x="3" y="1" width="1" height="12" fill="#9ad15a"/></svg>
<div class="a" style="left:142px;top:433px;width:272px;height:18px;background:#efefef"></div>
<div class="t" style="left:142px;top:435px;font-weight:bold">Indirektes Licht Wohnraum</div>
<div class="a" style="left:95px;top:460px;width:5px;height:1px;background:repeating-linear-gradient(90deg,#666 0 1px,transparent 1px 2px)"></div>
<div class="a" style="left:85px;top:456px;width:9px;height:9px;border:1px solid #7a7a7a;background:#fff"></div><div class="a" style="left:87px;top:460px;width:5px;height:1px;background:#000"></div>
<svg style="left:101px;top:453px" width="17" height="16"><circle cx="3.6" cy="2.4" r="2.4" fill="#6a6a6a"/><path d="M0 6.5 H7 V11 L6 12 V15 H0Z" fill="#626262"/><path d="M9 7 H16 V11.5 L15 12.5 V15 H9Z" fill="#dc1f1f"/><path d="M12.5 0.5 V4.5 M10.5 2.5 H14.5" stroke="#444" stroke-width="1"/></svg>
<div class="t" style="left:122px;top:453px;letter-spacing:-0.1px">Szene 2 speichern (Beleuchtung, Wohnraum)</div>
<div class="a" style="left:109px;top:469px;width:1px;height:9px;background:repeating-linear-gradient(#666 0 1px,transparent 1px 2px)"></div>
<div class="a" style="left:110px;top:478px;width:11px;height:1px;background:repeating-linear-gradient(90deg,#666 0 1px,transparent 1px 2px)"></div>
<svg style="left:123px;top:471px" width="12" height="14"><path d="M0.5 0.5 H8 L11.5 4 V13.5 H0.5Z" fill="#fff" stroke="#6e6e6e"/><path d="M8 0.5 V4 H11.5" fill="none" stroke="#6e6e6e"/><rect x="3" y="1" width="1" height="12" fill="#9ad15a"/></svg>
<div class="t" style="left:142px;top:471px">Indirektes Licht Wohnraum</div>
<div class="a" style="left:95px;top:496px;width:5px;height:1px;background:repeating-linear-gradient(90deg,#666 0 1px,transparent 1px 2px)"></div>
<div class="a" style="left:85px;top:492px;width:9px;height:9px;border:1px solid #7a7a7a;background:#fff"></div><div class="a" style="left:87px;top:496px;width:5px;height:1px;background:#000"></div>
<svg style="left:101px;top:489px" width="17" height="16"><circle cx="3.6" cy="2.4" r="2.4" fill="#6a6a6a"/><path d="M0 6.5 H7 V11 L6 12 V15 H0Z" fill="#626262"/><path d="M9 7 H16 V11.5 L15 12.5 V15 H9Z" fill="#dc1f1f"/><path d="M12.5 0.5 V4.5 M10.5 2.5 H14.5" stroke="#444" stroke-width="1"/></svg>
<div class="t" style="left:122px;top:489px;letter-spacing:-0.1px">Szene 3 (Beleuchtung, Wohnraum)</div>
<div class="a" style="left:109px;top:505px;width:1px;height:9px;background:repeating-linear-gradient(#666 0 1px,transparent 1px 2px)"></div>
<div class="a" style="left:110px;top:514px;width:11px;height:1px;background:repeating-linear-gradient(90deg,#666 0 1px,transparent 1px 2px)"></div>
<svg style="left:123px;top:507px" width="12" height="14"><path d="M0.5 0.5 H8 L11.5 4 V13.5 H0.5Z" fill="#fff" stroke="#6e6e6e"/><path d="M8 0.5 V4 H11.5" fill="none" stroke="#6e6e6e"/><rect x="3" y="1" width="1" height="12" fill="#9ad15a"/></svg>
<div class="t" style="left:142px;top:507px">Indirektes Licht Wohnraum</div>
<div class="a" style="left:95px;top:532px;width:5px;height:1px;background:repeating-linear-gradient(90deg,#666 0 1px,transparent 1px 2px)"></div>
<div class="a" style="left:85px;top:528px;width:9px;height:9px;border:1px solid #7a7a7a;background:#fff"></div><div class="a" style="left:87px;top:532px;width:5px;height:1px;background:#000"></div>
<svg style="left:101px;top:525px" width="17" height="16"><circle cx="3.6" cy="2.4" r="2.4" fill="#6a6a6a"/><path d="M0 6.5 H7 V11 L6 12 V15 H0Z" fill="#626262"/><path d="M9 7 H16 V11.5 L15 12.5 V15 H9Z" fill="#dc1f1f"/><path d="M12.5 0.5 V4.5 M10.5 2.5 H14.5" stroke="#444" stroke-width="1"/></svg>
<div class="t" style="left:122px;top:525px;letter-spacing:-0.1px">Szene 3 speichern (Beleuchtung, Wohnraum)</div>
<div class="a" style="left:109px;top:541px;width:1px;height:9px;background:repeating-linear-gradient(#666 0 1px,transparent 1px 2px)"></div>
<div class="a" style="left:110px;top:550px;width:11px;height:1px;background:repeating-linear-gradient(90deg,#666 0 1px,transparent 1px 2px)"></div>
<svg style="left:123px;top:543px" width="12" height="14"><path d="M0.5 0.5 H8 L11.5 4 V13.5 H0.5Z" fill="#fff" stroke="#6e6e6e"/><path d="M8 0.5 V4 H11.5" fill="none" stroke="#6e6e6e"/><rect x="3" y="1" width="1" height="12" fill="#9ad15a"/></svg>
<div class="t" style="left:142px;top:543px">Indirektes Licht Wohnraum</div>
<div class="a" style="left:95px;top:568px;width:5px;height:1px;background:repeating-linear-gradient(90deg,#666 0 1px,transparent 1px 2px)"></div>
<div class="a" style="left:85px;top:564px;width:9px;height:9px;border:1px solid #7a7a7a;background:#fff"></div><div class="a" style="left:87px;top:568px;width:5px;height:1px;background:#000"></div><div class="a" style="left:89px;top:566px;width:1px;height:5px;background:#000"></div>
<svg style="left:101px;top:561px" width="17" height="16"><circle cx="3.6" cy="2.4" r="2.4" fill="#6a6a6a"/><path d="M0 6.5 H7 V11 L6 12 V15 H0Z" fill="#626262"/><path d="M9 7 H16 V11.5 L15 12.5 V15 H9Z" fill="#dc1f1f"/></svg>
<div class="t" style="left:122px;top:561px;letter-spacing:-0.1px">Taster Keller lang (Nicht zugeordnet, Schrankraum)</div>
<div class="a" style="left:90px;top:586px;width:10px;height:1px;background:repeating-linear-gradient(90deg,#666 0 1px,transparent 1px 2px)"></div>
<svg style="left:101px;top:579px" width="17" height="16"><circle cx="3.6" cy="2.4" r="2.4" fill="#6a6a6a"/><path d="M0 6.5 H7 V11 L6 12 V15 H0Z" fill="#626262"/><path d="M9 7 H16 V11.5 L15 12.5 V15 H9Z" fill="#dc1f1f"/></svg>
<div class="t" style="left:122px;top:579px;letter-spacing:-0.1px">Trigger Indirekt (Beleuchtung, Wohnraum)</div>
<div class="a" style="left:95px;top:604px;width:5px;height:1px;background:repeating-linear-gradient(90deg,#666 0 1px,transparent 1px 2px)"></div>
<div class="a" style="left:85px;top:600px;width:9px;height:9px;border:1px solid #7a7a7a;background:#fff"></div><div class="a" style="left:87px;top:604px;width:5px;height:1px;background:#000"></div><div class="a" style="left:89px;top:602px;width:1px;height:5px;background:#000"></div>
<svg style="left:101px;top:597px" width="17" height="16"><circle cx="3.6" cy="2.4" r="2.4" fill="#6a6a6a"/><path d="M0 6.5 H7 V11 L6 12 V15 H0Z" fill="#626262"/><path d="M9 7 H16 V11.5 L15 12.5 V15 H9Z" fill="#dc1f1f"/></svg>
<div class="t" style="left:122px;top:597px;letter-spacing:-0.1px">Wandleuchten WZ (Beleuchtung, Wohnraum)</div>
<div class="a" style="left:95px;top:622px;width:5px;height:1px;background:repeating-linear-gradient(90deg,#666 0 1px,transparent 1px 2px)"></div>
<div class="a" style="left:85px;top:618px;width:9px;height:9px;border:1px solid #7a7a7a;background:#fff"></div><div class="a" style="left:87px;top:622px;width:5px;height:1px;background:#000"></div><div class="a" style="left:89px;top:620px;width:1px;height:5px;background:#000"></div>
<svg style="left:101px;top:615px" width="17" height="16"><circle cx="3.6" cy="2.4" r="2.4" fill="#6a6a6a"/><path d="M0 6.5 H7 V11 L6 12 V15 H0Z" fill="#626262"/><path d="M9 7 H16 V11.5 L15 12.5 V15 H9Z" fill="#dc1f1f"/></svg>
<div class="t" style="left:122px;top:615px;letter-spacing:-0.1px">Wandleuchten WZ (Beleuchtung, Wohnraum)</div>
<div class="a" style="left:95px;top:640px;width:5px;height:1px;background:repeating-linear-gradient(90deg,#666 0 1px,transparent 1px 2px)"></div>
<div class="a" style="left:85px;top:636px;width:9px;height:9px;border:1px solid #7a7a7a;background:#fff"></div><div class="a" style="left:87px;top:640px;width:5px;height:1px;background:#000"></div><div class="a" style="left:89px;top:638px;width:1px;height:5px;background:#000"></div>
<svg style="left:101px;top:633px" width="17" height="16"><circle cx="3.6" cy="2.4" r="2.4" fill="#6a6a6a"/><path d="M0 6.5 H7 V11 L6 12 V15 H0Z" fill="#626262"/><path d="M9 7 H16 V11.5 L15 12.5 V15 H9Z" fill="#dc1f1f"/></svg>
<div class="t" style="left:122px;top:633px;letter-spacing:-0.1px">Wind (Wetter, Außenbereich)</div>
<div class="a" style="left:90px;top:658px;width:10px;height:1px;background:repeating-linear-gradient(90deg,#666 0 1px,transparent 1px 2px)"></div>
<svg style="left:101px;top:651px" width="17" height="16"><circle cx="3.6" cy="2.4" r="2.4" fill="#6a6a6a"/><path d="M0 6.5 H7 V11 L6 12 V15 H0Z" fill="#626262"/><path d="M9 7 H16 V11.5 L15 12.5 V15 H9Z" fill="#dc1f1f"/></svg>
<div class="t" style="left:122px;top:651px;letter-spacing:-0.1px">Wind (Nicht zugeordnet, Schrankraum)</div>
<div class="a" style="left:95px;top:676px;width:5px;height:1px;background:repeating-linear-gradient(90deg,#666 0 1px,transparent 1px 2px)"></div>
<div class="a" style="left:85px;top:672px;width:9px;height:9px;border:1px solid #7a7a7a;background:#fff"></div><div class="a" style="left:87px;top:676px;width:5px;height:1px;background:#000"></div><div class="a" style="left:89px;top:674px;width:1px;height:5px;background:#000"></div>
<svg style="left:101px;top:669px" width="17" height="16"><circle cx="3.6" cy="2.4" r="2.4" fill="#6a6a6a"/><path d="M0 6.5 H7 V11 L6 12 V15 H0Z" fill="#626262"/><path d="M9 7 H16 V11.5 L15 12.5 V15 H9Z" fill="#dc1f1f"/></svg>
<div class="t" style="left:122px;top:669px;letter-spacing:-0.1px">Wohnzimmer (Beschattung, Erdgeschoß)</div>
<div class="a" style="left:95px;top:694px;width:5px;height:1px;background:repeating-linear-gradient(90deg,#666 0 1px,transparent 1px 2px)"></div>
<div class="a" style="left:85px;top:690px;width:9px;height:9px;border:1px solid #7a7a7a;background:#fff"></div><div class="a" style="left:87px;top:694px;width:5px;height:1px;background:#000"></div><div class="a" style="left:89px;top:692px;width:1px;height:5px;background:#000"></div>
<svg style="left:101px;top:687px" width="17" height="16"><circle cx="3.6" cy="2.4" r="2.4" fill="#6a6a6a"/><path d="M0 6.5 H7 V11 L6 12 V15 H0Z" fill="#626262"/><path d="M9 7 H16 V11.5 L15 12.5 V15 H9Z" fill="#dc1f1f"/></svg>
<div class="t" style="left:122px;top:687px;letter-spacing:-0.1px">WZ Schiebefenster (Beschattung, Wohnraum)</div>
<div class="a" style="left:95px;top:712px;width:5px;height:1px;background:repeating-linear-gradient(90deg,#666 0 1px,transparent 1px 2px)"></div>
<div class="a" style="left:85px;top:708px;width:9px;height:9px;border:1px solid #7a7a7a;background:#fff"></div><div class="a" style="left:87px;top:712px;width:5px;height:1px;background:#000"></div><div class="a" style="left:89px;top:710px;width:1px;height:5px;background:#000"></div>
<svg style="left:101px;top:705px" width="17" height="16"><circle cx="3.6" cy="2.4" r="2.4" fill="#6a6a6a"/><path d="M0 6.5 H7 V11 L6 12 V15 H0Z" fill="#626262"/><path d="M9 7 H16 V11.5 L15 12.5 V15 H9Z" fill="#dc1f1f"/></svg>
<div class="t" style="left:122px;top:705px;letter-spacing:-0.1px">WZ Tür&nbsp; (Beschattung, Wohnraum)</div>
<div class="a" style="left:95px;top:730px;width:5px;height:1px;background:repeating-linear-gradient(90deg,#666 0 1px,transparent 1px 2px)"></div>
<div class="a" style="left:85px;top:726px;width:9px;height:9px;border:1px solid #7a7a7a;background:#fff"></div><div class="a" style="left:87px;top:730px;width:5px;height:1px;background:#000"></div><div class="a" style="left:89px;top:728px;width:1px;height:5px;background:#000"></div>
<svg style="left:101px;top:723px" width="17" height="16"><circle cx="3.6" cy="2.4" r="2.4" fill="#6a6a6a"/><path d="M0 6.5 H7 V11 L6 12 V15 H0Z" fill="#626262"/><path d="M9 7 H16 V11.5 L15 12.5 V15 H9Z" fill="#dc1f1f"/></svg>
<div class="t" style="left:122px;top:723px;letter-spacing:-0.1px">WZ Tür Fixteil (Beschattung, Wohnraum)</div>
<div class="a" style="left:55px;top:748px;width:4px;height:1px;background:repeating-linear-gradient(90deg,#666 0 1px,transparent 1px 2px)"></div>
<div class="a" style="left:45px;top:744px;width:9px;height:9px;border:1px solid #7a7a7a;background:#fff"></div><div class="a" style="left:47px;top:748px;width:5px;height:1px;background:#000"></div><div class="a" style="left:49px;top:746px;width:1px;height:5px;background:#000"></div>
<svg style="left:60px;top:741px" width="16" height="14"><rect x="0.5" y="0.5" width="15" height="13" rx="1.5" fill="#8cc63f" stroke="#5a9a1a"/><path d="M1 4 H6 L9 7 L6 10 H1Z" fill="#555"/></svg>
<div class="t" style="left:82px;top:741px">Virtuelle Eingänge</div>
<div class="a" style="left:50px;top:766px;width:9px;height:1px;background:repeating-linear-gradient(90deg,#666 0 1px,transparent 1px 2px)"></div>
<svg style="left:60px;top:759px" width="16" height="14"><rect x="0.5" y="0.5" width="15" height="13" rx="1.5" fill="#8cc63f" stroke="#5a9a1a"/><path d="M6 4 H11 L14 7 L11 10 H6Z" fill="#555"/></svg>
<div class="t" style="left:82px;top:759px">Virtuelle Ausgänge</div>
<div class="a" style="left:50px;top:784px;width:9px;height:1px;background:repeating-linear-gradient(90deg,#666 0 1px,transparent 1px 2px)"></div>
<svg style="left:61px;top:778px" width="16" height="13"><path d="M3 4 C3 1 13 1 13 4Z" fill="#888"/><rect x="1" y="5" width="14" height="2" fill="#888"/><rect x="2" y="8" width="12" height="1.5" fill="#999"/><rect x="0" y="10.5" width="16" height="1.5" fill="#8cc63f"/></svg>
<div class="t" style="left:82px;top:777px">Miniserverkommunikation</div>
<div class="a" style="left:55px;top:802px;width:4px;height:1px;background:repeating-linear-gradient(90deg,#666 0 1px,transparent 1px 2px)"></div>
<div class="a" style="left:45px;top:798px;width:9px;height:9px;border:1px solid #7a7a7a;background:#fff"></div><div class="a" style="left:47px;top:802px;width:5px;height:1px;background:#000"></div><div class="a" style="left:49px;top:800px;width:1px;height:5px;background:#000"></div>
<svg style="left:60px;top:795px" width="16" height="15"><rect x="5.5" y="0.5" width="10" height="14" fill="#fff" stroke="#666"/><path d="M7.5 4 H13.5 M7.5 6.5 H13.5 M7.5 9 H13.5 M7.5 11.5 H13.5" stroke="#777"/><path d="M0 8 H4 M2.5 5.5 L5 8 L2.5 10.5" stroke="#8cc63f" stroke-width="2" fill="none"/></svg>
<div class="t" style="left:82px;top:795px">Mitteilungen</div>
</div>
<div class="a" style="left:733px;top:133px;width:17px;height:836px;background:#f0f0f0"></div>
<div class="a" style="left:734px;top:763px;width:15px;height:188px;background:#cdcdcd"></div>
<svg style="left:737px;top:139px" width="10" height="6"><path d="M0.8 5.2 L5 1.2 L9.2 5.2" fill="none" stroke="#606060" stroke-width="1.6"/></svg>
<svg style="left:737px;top:957px" width="10" height="6"><path d="M0.8 0.8 L5 4.8 L9.2 0.8" fill="none" stroke="#606060" stroke-width="1.6"/></svg>
<div class="a" style="left:319px;top:969px;width:431px;height:16px;background:#f0f0f0"></div>
<div class="a" style="left:337px;top:969px;width:330px;height:16px;background:#cdcdcd"></div>
<svg style="left:326px;top:972px" width="6" height="10"><path d="M5.2 0.8 L1.2 5 L5.2 9.2" fill="none" stroke="#606060" stroke-width="1.6"/></svg>
<svg style="left:721px;top:972px" width="6" height="10"><path d="M0.8 0.8 L4.8 5 L0.8 9.2" fill="none" stroke="#606060" stroke-width="1.6"/></svg>
<div class="a" style="left:319px;top:986px;width:432px;height:1px;background:#222"></div>
<div class="a" style="left:319px;top:986px;width:80px;height:23px;background:#fff;border-right:1px solid #222;border-bottom:1px solid #222"></div>
<svg style="left:323px;top:990px" width="16" height="15"><rect x="0.5" y="5.5" width="11" height="9" fill="#f8f8f8" stroke="#777"/><path d="M2.5 9 H9.5 M2.5 11.5 H9.5" stroke="#999"/><path d="M2 6 L6 2 L9 4 L14 1" fill="none" stroke="#7cc143" stroke-width="2"/><path d="M12 0 L15.5 0 V4Z" fill="#7cc143"/></svg>
<div class="t" style="left:341px;top:991px">Peripherie</div>
<svg style="left:404px;top:990px" width="16" height="15"><rect x="0.5" y="5.5" width="11" height="9" fill="#f8f8f8" stroke="#777"/><path d="M2.5 9 H9.5 M2.5 11.5 H9.5" stroke="#999"/><path d="M2 6 L6 2 L9 4 L14 1" fill="none" stroke="#7cc143" stroke-width="2"/><path d="M12 0 L15.5 0 V4Z" fill="#7cc143"/></svg>
<div class="t" style="left:422px;top:991px;color:#8a8a8a">Programm</div>
<div class="a" style="left:480px;top:990px;width:1px;height:15px;background:#bbb"></div>
<div class="a" style="left:752px;top:91px;width:4px;height:920px;background:#fff"></div>
<div class="a" style="left:756px;top:91px;width:1156px;height:920px;background:#fff;border:1px solid #a0a0a0;border-right:none"></div>
<div class="a" style="left:757px;top:92px;width:1155px;height:21px;background:#f7f7f7"></div>
<div class="a" style="left:757px;top:111px;width:1155px;height:897px;background:#fbd97a"></div>
<div class="a" style="left:759px;top:113px;width:1148px;height:873px;background:#5f6470"></div><div class="a" style="left:760px;top:114px;width:1147px;height:872px;background:#a3a3a3"></div><div class="a" style="left:761px;top:115px;width:1146px;height:871px;background:#6b6b6b"></div><div class="a" style="left:1907px;top:113px;width:2px;height:873px;background:#f4f4f4"></div>
<div class="a" style="left:762px;top:116px;width:1145px;height:870px;background:#ababab"></div>
<svg style="left:760px;top:94px" width="128" height="19"><path d="M0.5 18.5 L18 0.5 H125 L126.5 2 V18.5Z" fill="#fcd87a" stroke="#b9b9b9" stroke-width="1"/><path d="M1 19 H127" stroke="#fcd87a" stroke-width="2"/></svg>
<div class="t" style="left:791px;top:95px;font-weight:bold;font-size:11.5px">Roth neu test</div>
<div class="a" style="left:871px;top:97px;width:12px;height:12px;background:#c44848"></div>
<svg style="left:873px;top:99px" width="8" height="8"><path d="M1.5 1.5 L6.5 6.5 M6.5 1.5 L1.5 6.5" stroke="#fff" stroke-width="1.5"/></svg>
<svg style="left:1894px;top:99px" width="10" height="6"><path d="M0 0 H10 L5 5.5Z" fill="#111"/></svg>
<div class="a" style="left:773px;top:154px;width:1122px;height:794px;background:#fff"></div>
<div class="a" style="left:849px;top:192px;width:1009px;height:718px;border:1px dashed #bdbdbd"></div>
<svg style="left:801px;top:390px" width="18" height="18"><circle cx="9" cy="9" r="8.5" fill="#d3d3d3"/></svg>
<svg style="left:801px;top:692px" width="18" height="18"><circle cx="9" cy="9" r="8.5" fill="#d3d3d3"/></svg>
<div class="t" style="left:849px;top:896px;font-weight:bold;font-size:11.6px;color:#111">Roth neu test/Indirektes Licht Wohnraum</div>
<div class="t" style="left:1304px;top:896px;font-weight:bold;font-size:11px;color:#111">20.10.2015 20:22:05</div>
<div class="t" style="left:1807px;top:896px;font-weight:bold;font-size:11px;color:#111">Seite 8/18</div>
<svg style="left:0;top:0" width="1920" height="1080" viewBox="0 0 1920 1080"><defs><linearGradient id="gt" x1="0" x2="1"><stop offset="0" stop-color="#c5d3ad"/><stop offset="0.6" stop-color="#f4f7ef"/><stop offset="1" stop-color="#ffffff"/></linearGradient><linearGradient id="gs" x1="0" x2="1"><stop offset="0" stop-color="#fbfcf9"/><stop offset="0.5" stop-color="#dfe7d2"/><stop offset="1" stop-color="#c8d5b0"/></linearGradient><linearGradient id="gp" x1="0" y1="0" x2="0" y2="1"><stop offset="0" stop-color="#b9b9e0"/><stop offset="0.5" stop-color="#cdcdf0"/><stop offset="1" stop-color="#c3c3e6"/></linearGradient></defs><rect x="1291.5" y="442.5" width="281" height="421" rx="4" fill="#fff" stroke="#6f7a62" stroke-width="1.2"/><path d="M1292 455 V446 Q1292 443 1295 443 H1568 Q1572 443 1572 446 V455Z" fill="url(#gt)"/><rect x="1292" y="455" width="280" height="12.5" fill="url(#gs)"/><path d="M1292 455 H1572" stroke="#7f8a70" stroke-width="1"/><path d="M1292 467.5 H1572" stroke="#7f8a70" stroke-width="1"/><path d="M1292 852 H1572 V859 Q1572 863 1568 863 H1295 Q1292 863 1292 859Z" fill="#cbd7b5"/><rect x="1291.5" y="442.5" width="281" height="421" rx="4" fill="none" stroke="#6f7a62" stroke-width="1.2"/><text x="1294" y="453" font-family="Liberation Sans" font-size="11" font-weight="bold" fill="#111">Lichtsteuerung</text><circle cx="1566" cy="448.5" r="4.3" fill="#6e6e6e"/><rect x="1565.2" y="447.0" width="1.6" height="4" fill="#ddd"/><circle cx="1566" cy="445.7" r="0.9" fill="#ddd"/><text x="1431.5" y="465" font-family="Liberation Sans" font-size="11.2" fill="#8a1a1a" text-anchor="middle">Lichtsteuerung</text><path d="M1286 474.5 H1291" stroke="#8b1414" stroke-width="1"/><rect x="1279.5" y="471.5" width="6" height="6" fill="#f7893a" stroke="#111" stroke-width="1"/><rect x="1280" y="473" width="2" height="2" fill="#111"/><text x="1294.5" y="478.5" font-family="Liberation Sans" font-size="11" fill="#111">I1</text><path d="M1286 487.5 H1291" stroke="#8b1414" stroke-width="1"/><rect x="1279.5" y="484.5" width="6" height="6" fill="#f7893a" stroke="#111" stroke-width="1"/><rect x="1280" y="486" width="2" height="2" fill="#111"/><text x="1294.5" y="491.5" font-family="Liberation Sans" font-size="11" fill="#111">I2</text><path d="M1286 500.5 H1291" stroke="#8b1414" stroke-width="1"/><rect x="1279.5" y="497.5" width="6" height="6" fill="#f7893a" stroke="#111" stroke-width="1"/><rect x="1280" y="499" width="2" height="2" fill="#111"/><text x="1294.5" y="504.5" font-family="Liberation Sans" font-size="11" fill="#111">I3</text><path d="M1286 512.5 H1291" stroke="#8b1414" stroke-width="1"/><rect x="1279.5" y="509.5" width="6" height="6" fill="#f7893a" stroke="#111" stroke-width="1"/><rect x="1280" y="511" width="2" height="2" fill="#111"/><text x="1294.5" y="516.5" font-family="Liberation Sans" font-size="11" fill="#111">I4</text><path d="M1286 525.5 H1291" stroke="#8b1414" stroke-width="1"/><rect x="1279.5" y="522.5" width="6" height="6" fill="#f7893a" stroke="#111" stroke-width="1"/><rect x="1280" y="524" width="2" height="2" fill="#111"/><text x="1294.5" y="529.5" font-family="Liberation Sans" font-size="11" fill="#111">I5</text><path d="M1286 538.5 H1291" stroke="#8b1414" stroke-width="1"/><rect x="1279.5" y="535.5" width="6" height="6" fill="#f7893a" stroke="#111" stroke-width="1"/><rect x="1280" y="537" width="2" height="2" fill="#111"/><text x="1294.5" y="542.5" font-family="Liberation Sans" font-size="11" fill="#111">I6</text><path d="M1286 551.5 H1291" stroke="#8b1414" stroke-width="1"/><rect x="1279.5" y="548.5" width="6" height="6" fill="#f7893a" stroke="#111" stroke-width="1"/><rect x="1280" y="550" width="2" height="2" fill="#111"/><text x="1294.5" y="555.5" font-family="Liberation Sans" font-size="11" fill="#111">I7</text><path d="M1286 564.5 H1291" stroke="#8b1414" stroke-width="1"/><rect x="1279.5" y="561.5" width="6" height="6" fill="#f7893a" stroke="#111" stroke-width="1"/><rect x="1280" y="563" width="2" height="2" fill="#111"/><text x="1294.5" y="568.5" font-family="Liberation Sans" font-size="11" fill="#111">I8</text><path d="M1286 576.5 H1291" stroke="#8b1414" stroke-width="1"/><rect x="1279.5" y="573.5" width="6" height="6" fill="#f7893a" stroke="#111" stroke-width="1"/><rect x="1280" y="575" width="2" height="2" fill="#111"/><text x="1294.5" y="580.5" font-family="Liberation Sans" font-size="11" fill="#111">I9</text><path d="M1286 589.5 H1291" stroke="#8b1414" stroke-width="1"/><rect x="1279.5" y="586.5" width="6" height="6" fill="#f7893a" stroke="#111" stroke-width="1"/><rect x="1280" y="588" width="2" height="2" fill="#111"/><text x="1294.5" y="593.5" font-family="Liberation Sans" font-size="11" fill="#111">I10</text><path d="M1286 602.5 H1291" stroke="#8b1414" stroke-width="1"/><rect x="1279.5" y="599.5" width="6" height="6" fill="#f7893a" stroke="#111" stroke-width="1"/><rect x="1280" y="601" width="2" height="2" fill="#111"/><text x="1294.5" y="606.5" font-family="Liberation Sans" font-size="11" fill="#111">I11</text><path d="M1286 615.5 H1291" stroke="#8b1414" stroke-width="1"/><rect x="1279.5" y="612.5" width="6" height="6" fill="#f7893a" stroke="#111" stroke-width="1"/><rect x="1280" y="614" width="2" height="2" fill="#111"/><text x="1294.5" y="619.5" font-family="Liberation Sans" font-size="11" fill="#111">I12</text><path d="M1286 628.5 H1291" stroke="#8b1414" stroke-width="1"/><rect x="1279.5" y="625.5" width="6" height="6" fill="#f7893a" stroke="#111" stroke-width="1"/><rect x="1280" y="627" width="2" height="2" fill="#111"/><text x="1294.5" y="632.5" font-family="Liberation Sans" font-size="11" fill="#111">+</text><path d="M1286 640.5 H1291" stroke="#8b1414" stroke-width="1"/><rect x="1279.5" y="637.5" width="6" height="6" fill="#f7893a" stroke="#111" stroke-width="1"/><rect x="1280" y="639" width="2" height="2" fill="#111"/><text x="1294.5" y="644.5" font-family="Liberation Sans" font-size="11" fill="#111">-</text><path d="M1286 653.5 H1291" stroke="#8b1414" stroke-width="1"/><rect x="1279.5" y="650.5" width="6" height="6" fill="#f7893a" stroke="#111" stroke-width="1"/><rect x="1280" y="652" width="2" height="2" fill="#111"/><text x="1294.5" y="657.5" font-family="Liberation Sans" font-size="11" fill="#111">AIs</text><path d="M1286 666.5 H1291" stroke="#8b1414" stroke-width="1"/><rect x="1279.5" y="663.5" width="6" height="6" fill="#f7893a" stroke="#111" stroke-width="1"/><rect x="1280" y="665" width="2" height="2" fill="#111"/><text x="1294.5" y="670.5" font-family="Liberation Sans" font-size="11" fill="#111">R</text><path d="M1286 679.5 H1291" stroke="#8b1414" stroke-width="1"/><rect x="1279.5" y="676.5" width="6" height="6" fill="#f7893a" stroke="#111" stroke-width="1"/><rect x="1280" y="678" width="2" height="2" fill="#111"/><text x="1294.5" y="683.5" font-family="Liberation Sans" font-size="11" fill="#111">S1</text><path d="M1286 691.5 H1291" stroke="#8b1414" stroke-width="1"/><rect x="1279.5" y="688.5" width="6" height="6" fill="#f7893a" stroke="#111" stroke-width="1"/><rect x="1280" y="690" width="2" height="2" fill="#111"/><text x="1294.5" y="695.5" font-family="Liberation Sans" font-size="11" fill="#111">S2</text><path d="M1286 704.5 H1291" stroke="#8b1414" stroke-width="1"/><rect x="1279.5" y="701.5" width="6" height="6" fill="#f7893a" stroke="#111" stroke-width="1"/><rect x="1280" y="703" width="2" height="2" fill="#111"/><text x="1294.5" y="708.5" font-family="Liberation Sans" font-size="11" fill="#111">S3</text><path d="M1286 717.5 H1291" stroke="#8b1414" stroke-width="1"/><rect x="1279.5" y="714.5" width="6" height="6" fill="#f7893a" stroke="#111" stroke-width="1"/><rect x="1280" y="716" width="2" height="2" fill="#111"/><text x="1294.5" y="721.5" font-family="Liberation Sans" font-size="11" fill="#111">S4</text><path d="M1286 730.5 H1291" stroke="#8b1414" stroke-width="1"/><rect x="1279.5" y="727.5" width="6" height="6" fill="#f7893a" stroke="#111" stroke-width="1"/><rect x="1280" y="729" width="2" height="2" fill="#111"/><text x="1294.5" y="734.5" font-family="Liberation Sans" font-size="11" fill="#111">S5</text><path d="M1286 743.5 H1291" stroke="#8b1414" stroke-width="1"/><rect x="1279.5" y="740.5" width="6" height="6" fill="#f7893a" stroke="#111" stroke-width="1"/><rect x="1280" y="742" width="2" height="2" fill="#111"/><text x="1294.5" y="747.5" font-family="Liberation Sans" font-size="11" fill="#111">S6</text><path d="M1286 755.5 H1291" stroke="#8b1414" stroke-width="1"/><rect x="1279.5" y="752.5" width="6" height="6" fill="#f7893a" stroke="#111" stroke-width="1"/><rect x="1280" y="754" width="2" height="2" fill="#111"/><text x="1294.5" y="759.5" font-family="Liberation Sans" font-size="11" fill="#111">S7</text><path d="M1286 768.5 H1291" stroke="#8b1414" stroke-width="1"/><rect x="1279.5" y="765.5" width="6" height="6" fill="#f7893a" stroke="#111" stroke-width="1"/><rect x="1280" y="767" width="2" height="2" fill="#111"/><text x="1294.5" y="772.5" font-family="Liberation Sans" font-size="11" fill="#111">S8</text><path d="M1286 781.5 H1291" stroke="#8b1414" stroke-width="1"/><rect x="1279.5" y="778.5" width="6" height="6" fill="#f7893a" stroke="#111" stroke-width="1"/><rect x="1280" y="780" width="2" height="2" fill="#111"/><text x="1294.5" y="785.5" font-family="Liberation Sans" font-size="11" fill="#111">DisMv</text><path d="M1286 794.5 H1291" stroke="#8b1414" stroke-width="1"/><rect x="1279.5" y="791.5" width="6" height="6" fill="#f7893a" stroke="#111" stroke-width="1"/><rect x="1280" y="793" width="2" height="2" fill="#111"/><text x="1294.5" y="798.5" font-family="Liberation Sans" font-size="11" fill="#111">Mv</text><path d="M1286 807.5 H1291" stroke="#8b1414" stroke-width="1"/><rect x="1279.5" y="804.5" width="6" height="6" fill="#f7893a" stroke="#111" stroke-width="1"/><rect x="1280" y="806" width="2" height="2" fill="#111"/><text x="1294.5" y="811.5" font-family="Liberation Sans" font-size="11" fill="#111">O</text><path d="M1286 819.5 H1291" stroke="#8b1414" stroke-width="1"/><rect x="1279.5" y="816.5" width="6" height="6" fill="#f7893a" stroke="#111" stroke-width="1"/><rect x="1280" y="818" width="2" height="2" fill="#111"/><text x="1294.5" y="823.5" font-family="Liberation Sans" font-size="11" fill="#111">G</text><path d="M1286 832.5 H1291" stroke="#8b1414" stroke-width="1"/><rect x="1279.5" y="829.5" width="6" height="6" fill="#f7893a" stroke="#111" stroke-width="1"/><rect x="1280" y="831" width="2" height="2" fill="#111"/><text x="1294.5" y="836.5" font-family="Liberation Sans" font-size="11" fill="#111">A</text><path d="M1286 845.5 H1291" stroke="#8b1414" stroke-width="1"/><rect x="1279.5" y="842.5" width="6" height="6" fill="#f7893a" stroke="#111" stroke-width="1"/><rect x="1280" y="844" width="2" height="2" fill="#111"/><text x="1294.5" y="849.5" font-family="Liberation Sans" font-size="11" fill="#111">Dis</text><path d="M1573 474.5 H1579" stroke="#8b1414" stroke-width="1"/><path d="M1579.5 471.5 H1583 Q1585.5 471.5 1585.5 474.5 Q1585.5 477.5 1583 477.5 H1579.5Z" fill="#47b30f" stroke="#111" stroke-width="1"/><text x="1570" y="478.5" font-family="Liberation Sans" font-size="11" fill="#111" text-anchor="end">AQ1</text><path d="M1573 487.5 H1579" stroke="#8b1414" stroke-width="1"/><path d="M1579.5 484.5 H1583 Q1585.5 484.5 1585.5 487.5 Q1585.5 490.5 1583 490.5 H1579.5Z" fill="#47b30f" stroke="#111" stroke-width="1"/><text x="1570" y="491.5" font-family="Liberation Sans" font-size="11" fill="#111" text-anchor="end">AQ2</text><path d="M1573 500.5 H1579" stroke="#8b1414" stroke-width="1"/><path d="M1579.5 497.5 H1583 Q1585.5 497.5 1585.5 500.5 Q1585.5 503.5 1583 503.5 H1579.5Z" fill="#47b30f" stroke="#111" stroke-width="1"/><text x="1570" y="504.5" font-family="Liberation Sans" font-size="11" fill="#111" text-anchor="end">AQ3</text><path d="M1573 512.5 H1579" stroke="#8b1414" stroke-width="1"/><path d="M1579.5 509.5 H1583 Q1585.5 509.5 1585.5 512.5 Q1585.5 515.5 1583 515.5 H1579.5Z" fill="#47b30f" stroke="#111" stroke-width="1"/><text x="1570" y="516.5" font-family="Liberation Sans" font-size="11" fill="#111" text-anchor="end">AQ4</text><path d="M1573 525.5 H1579" stroke="#8b1414" stroke-width="1"/><path d="M1579.5 522.5 H1583 Q1585.5 522.5 1585.5 525.5 Q1585.5 528.5 1583 528.5 H1579.5Z" fill="#47b30f" stroke="#111" stroke-width="1"/><text x="1570" y="529.5" font-family="Liberation Sans" font-size="11" fill="#111" text-anchor="end">AQ5</text><path d="M1573 538.5 H1579" stroke="#8b1414" stroke-width="1"/><path d="M1579.5 535.5 H1583 Q1585.5 535.5 1585.5 538.5 Q1585.5 541.5 1583 541.5 H1579.5Z" fill="#47b30f" stroke="#111" stroke-width="1"/><text x="1570" y="542.5" font-family="Liberation Sans" font-size="11" fill="#111" text-anchor="end">AQ6</text><path d="M1573 551.5 H1579" stroke="#8b1414" stroke-width="1"/><path d="M1579.5 548.5 H1583 Q1585.5 548.5 1585.5 551.5 Q1585.5 554.5 1583 554.5 H1579.5Z" fill="#47b30f" stroke="#111" stroke-width="1"/><text x="1570" y="555.5" font-family="Liberation Sans" font-size="11" fill="#111" text-anchor="end">AQ7</text><path d="M1573 564.5 H1579" stroke="#8b1414" stroke-width="1"/><path d="M1579.5 561.5 H1583 Q1585.5 561.5 1585.5 564.5 Q1585.5 567.5 1583 567.5 H1579.5Z" fill="#47b30f" stroke="#111" stroke-width="1"/><text x="1570" y="568.5" font-family="Liberation Sans" font-size="11" fill="#111" text-anchor="end">AQ8</text><path d="M1573 576.5 H1579" stroke="#8b1414" stroke-width="1"/><path d="M1579.5 573.5 H1583 Q1585.5 573.5 1585.5 576.5 Q1585.5 579.5 1583 579.5 H1579.5Z" fill="#47b30f" stroke="#111" stroke-width="1"/><text x="1570" y="580.5" font-family="Liberation Sans" font-size="11" fill="#111" text-anchor="end">AQ9</text><path d="M1573 589.5 H1579" stroke="#8b1414" stroke-width="1"/><path d="M1579.5 586.5 H1583 Q1585.5 586.5 1585.5 589.5 Q1585.5 592.5 1583 592.5 H1579.5Z" fill="#47b30f" stroke="#111" stroke-width="1"/><text x="1570" y="593.5" font-family="Liberation Sans" font-size="11" fill="#111" text-anchor="end">AQ10</text><path d="M1573 602.5 H1579" stroke="#8b1414" stroke-width="1"/><path d="M1579.5 599.5 H1583 Q1585.5 599.5 1585.5 602.5 Q1585.5 605.5 1583 605.5 H1579.5Z" fill="#47b30f" stroke="#111" stroke-width="1"/><text x="1570" y="606.5" font-family="Liberation Sans" font-size="11" fill="#111" text-anchor="end">AQ11</text><path d="M1573 615.5 H1579" stroke="#8b1414" stroke-width="1"/><path d="M1579.5 612.5 H1583 Q1585.5 612.5 1585.5 615.5 Q1585.5 618.5 1583 618.5 H1579.5Z" fill="#47b30f" stroke="#111" stroke-width="1"/><text x="1570" y="619.5" font-family="Liberation Sans" font-size="11" fill="#111" text-anchor="end">AQ12</text><path d="M1573 628.5 H1579" stroke="#8b1414" stroke-width="1"/><path d="M1579.5 625.5 H1583 Q1585.5 625.5 1585.5 628.5 Q1585.5 631.5 1583 631.5 H1579.5Z" fill="#47b30f" stroke="#111" stroke-width="1"/><text x="1570" y="632.5" font-family="Liberation Sans" font-size="11" fill="#111" text-anchor="end">AQs</text><path d="M1573 640.5 H1579" stroke="#8b1414" stroke-width="1"/><path d="M1579.5 637.5 H1583 Q1585.5 637.5 1585.5 640.5 Q1585.5 643.5 1583 643.5 H1579.5Z" fill="#47b30f" stroke="#111" stroke-width="1"/><text x="1570" y="644.5" font-family="Liberation Sans" font-size="11" fill="#111" text-anchor="end">RQ</text><path d="M1573 653.5 H1579" stroke="#8b1414" stroke-width="1"/><path d="M1579.5 650.5 H1583 Q1585.5 650.5 1585.5 653.5 Q1585.5 656.5 1583 656.5 H1579.5Z" fill="#47b30f" stroke="#111" stroke-width="1"/><text x="1570" y="657.5" font-family="Liberation Sans" font-size="11" fill="#111" text-anchor="end">RaQ</text><path d="M1305.5 863 V871" stroke="#8b1414" stroke-width="1"/><rect x="1301.5" y="854" width="7" height="7" rx="1" fill="#9a9a9a"/><rect x="1302.5" y="855" width="5" height="3" fill="#e8c02c"/><ellipse cx="1305.0" cy="854.2" rx="3.5" ry="1.2" fill="#ddd"/><circle cx="1305.5" cy="867" r="2.8" fill="#f01010"/><path d="M1302.5 871.5 H1308.5 V877.5 L1307.5 876.5 L1305.5 875.5 L1303.5 876.5 L1302.5 877.5Z" fill="#111" stroke="#111" stroke-width="1"/><path d="M1324.5 863 V871" stroke="#8b1414" stroke-width="1"/><path d="M1321.5 871.5 H1327.5 V877.5 L1326.5 876.5 L1324.5 875.5 L1322.5 876.5 L1321.5 877.5Z" fill="#f7893a" stroke="#111" stroke-width="1"/><text x="1324.5" y="862" font-family="Liberation Sans" font-size="11" fill="#8b1a1a" text-anchor="middle">M</text><path d="M1343.5 863 V871" stroke="#8b1414" stroke-width="1"/><path d="M1340.5 871.5 H1346.5 V877.5 L1345.5 876.5 L1343.5 875.5 L1341.5 876.5 L1340.5 877.5Z" fill="#f7893a" stroke="#111" stroke-width="1"/><text x="1343.5" y="862" font-family="Liberation Sans" font-size="11" fill="#8b1a1a" text-anchor="middle">SI</text><path d="M1362.5 863 V871" stroke="#8b1414" stroke-width="1"/><path d="M1359.5 871.5 H1365.5 V877.5 L1364.5 876.5 L1362.5 875.5 L1360.5 876.5 L1359.5 877.5Z" fill="#f7893a" stroke="#111" stroke-width="1"/><text x="1362.5" y="862" font-family="Liberation Sans" font-size="11" fill="#8b1a1a" text-anchor="middle">ST</text><path d="M1382.5 863 V871" stroke="#8b1414" stroke-width="1"/><path d="M1379.5 871.5 H1385.5 V877.5 L1384.5 876.5 L1382.5 875.5 L1380.5 876.5 L1379.5 877.5Z" fill="#f7893a" stroke="#111" stroke-width="1"/><text x="1382.5" y="862" font-family="Liberation Sans" font-size="11" fill="#8b1a1a" text-anchor="middle">Min</text><path d="M1401.5 863 V871" stroke="#8b1414" stroke-width="1"/><path d="M1398.5 871.5 H1404.5 V877.5 L1403.5 876.5 L1401.5 875.5 L1399.5 876.5 L1398.5 877.5Z" fill="#f7893a" stroke="#111" stroke-width="1"/><text x="1401.5" y="862" font-family="Liberation Sans" font-size="11" fill="#8b1a1a" text-anchor="middle">Max</text><path d="M1420.5 863 V871" stroke="#8b1414" stroke-width="1"/><path d="M1417.5 871.5 H1423.5 V877.5 L1422.5 876.5 L1420.5 875.5 L1418.5 876.5 L1417.5 877.5Z" fill="#f7893a" stroke="#111" stroke-width="1"/><text x="1420.5" y="862" font-family="Liberation Sans" font-size="11" fill="#7a4a5a" text-anchor="middle">W</text><path d="M1439.5 863 V871" stroke="#8b1414" stroke-width="1"/><path d="M1436.5 871.5 H1442.5 V877.5 L1441.5 876.5 L1439.5 875.5 L1437.5 876.5 L1436.5 877.5Z" fill="#f7893a" stroke="#111" stroke-width="1"/><text x="1439.5" y="862" font-family="Liberation Sans" font-size="11" fill="#7a4a5a" text-anchor="middle">L</text><path d="M1458.5 863 V871" stroke="#8b1414" stroke-width="1"/><path d="M1455.5 871.5 H1461.5 V877.5 L1460.5 876.5 L1458.5 875.5 L1456.5 876.5 L1455.5 877.5Z" fill="#f7893a" stroke="#111" stroke-width="1"/><text x="1458.5" y="862" font-family="Liberation Sans" font-size="11" fill="#8b1a1a" text-anchor="middle">TH</text><path d="M1477.5 863 V871" stroke="#8b1414" stroke-width="1"/><path d="M1474.5 871.5 H1480.5 V877.5 L1479.5 876.5 L1477.5 875.5 L1475.5 876.5 L1474.5 877.5Z" fill="#f7893a" stroke="#111" stroke-width="1"/><text x="1477.5" y="862" font-family="Liberation Sans" font-size="11" fill="#8b1a1a" text-anchor="middle">LT</text><path d="M1496.5 863 V871" stroke="#8b1414" stroke-width="1"/><path d="M1493.5 871.5 H1499.5 V877.5 L1498.5 876.5 L1496.5 875.5 L1494.5 876.5 L1493.5 877.5Z" fill="#f7893a" stroke="#111" stroke-width="1"/><text x="1496.5" y="862" font-family="Liberation Sans" font-size="11" fill="#8b1a1a" text-anchor="middle">MS</text><path d="M1516.5 863 V871" stroke="#8b1414" stroke-width="1"/><path d="M1513.5 871.5 H1519.5 V877.5 L1518.5 876.5 L1516.5 875.5 L1514.5 876.5 L1513.5 877.5Z" fill="#f7893a" stroke="#111" stroke-width="1"/><text x="1516.5" y="862" font-family="Liberation Sans" font-size="11" fill="#8b1a1a" text-anchor="middle">MT</text><path d="M1535.5 863 V871" stroke="#8b1414" stroke-width="1"/><path d="M1532.5 871.5 H1538.5 V877.5 L1537.5 876.5 L1535.5 875.5 L1533.5 876.5 L1532.5 877.5Z" fill="#f7893a" stroke="#111" stroke-width="1"/><text x="1535.5" y="862" font-family="Liberation Sans" font-size="11" fill="#7a4a5a" text-anchor="middle">Ra</text><path d="M1554.5 863 V871" stroke="#8b1414" stroke-width="1"/><path d="M1551.5 871.5 H1557.5 V877.5 L1556.5 876.5 L1554.5 875.5 L1552.5 876.5 L1551.5 877.5Z" fill="#f7893a" stroke="#111" stroke-width="1"/><text x="1554.5" y="862" font-family="Liberation Sans" font-size="11" fill="#8b1a1a" text-anchor="middle">Ta</text><path d="M1586 474.5 H1611 M1618 474.5 H1625" stroke="#8b1414" stroke-width="1"/><path d="M1586 487.5 H1611 M1618 487.5 H1625" stroke="#111" stroke-width="1"/><rect x="1611.5" y="471.5" width="6" height="6" fill="#f7893a" stroke="#111" stroke-width="1"/><rect x="1612" y="473" width="2" height="2" fill="#111"/><rect x="1611.5" y="484.5" width="6" height="6" fill="#f7893a" stroke="#111" stroke-width="1"/><rect x="1612" y="486" width="2" height="2" fill="#111"/><rect x="1625.5" y="481.0" width="230" height="11.5" rx="6.25" fill="#c8c8ec" stroke="#555" stroke-width="1"/><rect x="1625.5" y="481.0" width="13.5" height="11.5" rx="6.25" fill="none" stroke="#111" stroke-width="1.2"/><text x="1632.3" y="491.5" font-family="Liberation Sans" font-size="11" font-weight="bold" fill="#111" text-anchor="middle">Q</text><text x="1644" y="491.5" font-family="Liberation Sans" font-size="11.6" font-weight="bold" fill="#111">Schaltaktor indirekte Beleuchtung</text><circle cx="1849" cy="487.3" r="4.2" fill="#6e6e6e"/><rect x="1848.2" y="485.8" width="1.6" height="4" fill="#ddd"/><circle cx="1849" cy="484.5" r="0.9" fill="#ddd"/><rect x="1625.5" y="468.5" width="218" height="11.5" rx="6.25" fill="#c8c8ec" stroke="#555" stroke-width="1"/><rect x="1625.5" y="468.5" width="13.5" height="11.5" rx="6.25" fill="none" stroke="#111" stroke-width="1.2"/><text x="1632.3" y="479" font-family="Liberation Sans" font-size="11" font-weight="bold" fill="#111" text-anchor="middle">Q</text><text x="1644" y="479" font-family="Liberation Sans" font-size="11.6" font-weight="bold" fill="#111">Dimmer indirektes Licht</text><circle cx="1836" cy="474.8" r="4.2" fill="#6e6e6e"/><rect x="1835.2" y="473.3" width="1.6" height="4" fill="#ddd"/><circle cx="1836" cy="472.0" r="0.9" fill="#ddd"/><path d="M1195 557.5 H1240.5 V692.5 H1280" fill="none" stroke="#0a9a0a" stroke-width="2"/><path d="M1221 628.5 H1240.5 V692" fill="none" stroke="#111" stroke-width="1"/><path d="M1183 557.5 H1189" stroke="#0a9a0a" stroke-width="1"/><rect x="1093.5" y="551.5" width="90" height="11.5" rx="6.25" fill="#90c41c" stroke="#555" stroke-width="1"/><rect x="1093.5" y="551.5" width="13.5" height="11.5" rx="6.25" fill="none" stroke="#111" stroke-width="1.2"/><text x="1100.3" y="562" font-family="Liberation Sans" font-size="11" font-weight="bold" fill="#111" text-anchor="middle">I</text><text x="1112" y="562" font-family="Liberation Sans" font-size="11.6" font-weight="bold" fill="#111">Szene 2</text><circle cx="1177" cy="557.8" r="4.2" fill="#6e6e6e"/><rect x="1176.2" y="556.3" width="1.6" height="4" fill="#ddd"/><circle cx="1177" cy="555.0" r="0.9" fill="#ddd"/><rect x="1189.5" y="554.5" width="5.5" height="6" fill="#47b30f" stroke="#111" stroke-width="1"/><path d="M1009 615.5 H1015 M1022 615.5 H1029.5 V628.5 H1042" fill="none" stroke="#111" stroke-width="1"/><rect x="856.5" y="608.5" width="153" height="11.5" rx="6.25" fill="#c8c8ec" stroke="#555" stroke-width="1"/><rect x="856.5" y="608.5" width="13.5" height="11.5" rx="6.25" fill="none" stroke="#111" stroke-width="1.2"/><text x="863.3" y="619" font-family="Liberation Sans" font-size="11" font-weight="bold" fill="#111" text-anchor="middle">I</text><text x="875" y="619" font-family="Liberation Sans" font-size="11.6" font-weight="bold" fill="#111">Szene 2 speichern</text><circle cx="1003" cy="614.8" r="4.2" fill="#6e6e6e"/><rect x="1002.2" y="613.3" width="1.6" height="4" fill="#ddd"/><circle cx="1003" cy="612.0" r="0.9" fill="#ddd"/><path d="M1015.5 612.5 H1019 Q1021.5 612.5 1021.5 615.5 Q1021.5 618.5 1019 618.5 H1015.5Z" fill="#47b30f" stroke="#111" stroke-width="1"/><rect x="1055.5" y="596.5" width="152" height="63" rx="4" fill="#fff" stroke="#6f7a62" stroke-width="1.2"/><path d="M1056 609 V600 Q1056 597 1059 597 H1203 Q1207 597 1207 600 V609Z" fill="url(#gt)"/><rect x="1056" y="609" width="151" height="12.5" fill="url(#gs)"/><path d="M1056 609 H1207" stroke="#7f8a70" stroke-width="1"/><path d="M1056 621.5 H1207" stroke="#7f8a70" stroke-width="1"/><path d="M1056 647 H1207 V655 Q1207 659 1203 659 H1059 Q1056 659 1056 655Z" fill="#cbd7b5"/><rect x="1055.5" y="596.5" width="152" height="63" rx="4" fill="none" stroke="#6f7a62" stroke-width="1.2"/><text x="1058" y="607" font-family="Liberation Sans" font-size="11" font-weight="bold" fill="#111">O263</text><circle cx="1201" cy="602.5" r="4.3" fill="#6e6e6e"/><rect x="1200.2" y="601.0" width="1.6" height="4" fill="#ddd"/><circle cx="1201" cy="599.7" r="0.9" fill="#ddd"/><text x="1131.0" y="619" font-family="Liberation Sans" font-size="11.2" fill="#6a5a50" text-anchor="middle">Ausschaltverzögerung</text><path d="M1049 628.5 H1055" stroke="#111" stroke-width="1"/><rect x="1042.5" y="625.5" width="6" height="6" fill="#f7893a" stroke="#111" stroke-width="1"/><rect x="1043" y="627" width="2" height="2" fill="#111"/><text x="1058.5" y="632.5" font-family="Liberation Sans" font-size="11" fill="#111">Tr</text><path d="M1049 641.5 H1055" stroke="#111" stroke-width="1"/><rect x="1042.5" y="638.5" width="6" height="6" fill="#f7893a" stroke="#111" stroke-width="1"/><rect x="1043" y="640" width="2" height="2" fill="#111"/><text x="1058.5" y="645.5" font-family="Liberation Sans" font-size="11" fill="#111">R</text><text x="1205" y="632.3" font-family="Liberation Sans" font-size="11" fill="#111" text-anchor="end">Q</text><path d="M1208 628.5 H1215" stroke="#111" stroke-width="1"/><path d="M1214.5 625.5 H1218 Q1220.5 625.5 1220.5 628.5 Q1220.5 631.5 1218 631.5 H1214.5Z" fill="#47b30f" stroke="#111" stroke-width="1"/><rect x="1064" y="649" width="7" height="7" rx="1" fill="#9a9a9a"/><rect x="1065" y="650" width="5" height="3" fill="#e8c02c"/><ellipse cx="1067.5" cy="649.2" rx="3.5" ry="1.2" fill="#ddd"/><text x="1087" y="657.5" font-family="Liberation Sans" font-size="11" fill="#8b1a1a" text-anchor="middle">T</text><path d="M1068.5 659 V666" stroke="#111" stroke-width="1"/><path d="M1065.5 666.5 H1071.5 V672.5 L1070.5 671.5 L1068.5 670.5 L1066.5 671.5 L1065.5 672.5Z" fill="#f7893a" stroke="#111" stroke-width="1"/><path d="M1087.5 659 V666" stroke="#111" stroke-width="1"/><path d="M1084.5 666.5 H1090.5 V672.5 L1089.5 671.5 L1087.5 670.5 L1085.5 671.5 L1084.5 672.5Z" fill="#f7893a" stroke="#111" stroke-width="1"/><path d="M978 730.5 H1144.5 V705.5 H1280" fill="none" stroke="#111" stroke-width="1"/><path d="M964 730.5 H971" stroke="#111" stroke-width="1"/><rect x="875.5" y="724.5" width="89" height="11.5" rx="6.25" fill="#c8c8ec" stroke="#555" stroke-width="1"/><rect x="875.5" y="724.5" width="13.5" height="11.5" rx="6.25" fill="none" stroke="#111" stroke-width="1.2"/><text x="882.3" y="735" font-family="Liberation Sans" font-size="11" font-weight="bold" fill="#111" text-anchor="middle">I</text><text x="894" y="735" font-family="Liberation Sans" font-size="11.6" font-weight="bold" fill="#111">Szene 3</text><circle cx="958" cy="730.8" r="4.2" fill="#6e6e6e"/><rect x="957.2" y="729.3" width="1.6" height="4" fill="#ddd"/><circle cx="958" cy="728.0" r="0.9" fill="#ddd"/><rect x="971.5" y="727.5" width="6" height="6" fill="#47b30f" stroke="#111" stroke-width="1"/><path d="M1253 794.5 H1266.5 V705" fill="none" stroke="#111" stroke-width="1"/><rect x="1087.5" y="762.5" width="152" height="63" rx="4" fill="#fff" stroke="#6f7a62" stroke-width="1.2"/><path d="M1088 775 V766 Q1088 763 1091 763 H1235 Q1239 763 1239 766 V775Z" fill="url(#gt)"/><rect x="1088" y="775" width="151" height="12.5" fill="url(#gs)"/><path d="M1088 775 H1239" stroke="#7f8a70" stroke-width="1"/><path d="M1088 787.5 H1239" stroke="#7f8a70" stroke-width="1"/><path d="M1088 813 H1239 V821 Q1239 825 1235 825 H1091 Q1088 825 1088 821Z" fill="#cbd7b5"/><rect x="1087.5" y="762.5" width="152" height="63" rx="4" fill="none" stroke="#6f7a62" stroke-width="1.2"/><text x="1090" y="773" font-family="Liberation Sans" font-size="11" font-weight="bold" fill="#111">O263</text><circle cx="1233" cy="768.5" r="4.3" fill="#6e6e6e"/><rect x="1232.2" y="767.0" width="1.6" height="4" fill="#ddd"/><circle cx="1233" cy="765.7" r="0.9" fill="#ddd"/><text x="1163.0" y="785" font-family="Liberation Sans" font-size="11.2" fill="#6a5a50" text-anchor="middle">Ausschaltverzögerung</text><path d="M1081 794.5 H1087" stroke="#111" stroke-width="1"/><rect x="1074.5" y="791.5" width="6" height="6" fill="#f7893a" stroke="#111" stroke-width="1"/><rect x="1075" y="793" width="2" height="2" fill="#111"/><text x="1090.5" y="798.5" font-family="Liberation Sans" font-size="11" fill="#111">Tr</text><path d="M1081 807.5 H1087" stroke="#111" stroke-width="1"/><rect x="1074.5" y="804.5" width="6" height="6" fill="#f7893a" stroke="#111" stroke-width="1"/><rect x="1075" y="806" width="2" height="2" fill="#111"/><text x="1090.5" y="811.5" font-family="Liberation Sans" font-size="11" fill="#111">R</text><text x="1237" y="798.5" font-family="Liberation Sans" font-size="11" fill="#111" text-anchor="end">Q</text><path d="M1240 794.5 H1246" stroke="#111" stroke-width="1"/><path d="M1246.5 791.5 H1250 Q1252.5 791.5 1252.5 794.5 Q1252.5 797.5 1250 797.5 H1246.5Z" fill="#47b30f" stroke="#111" stroke-width="1"/><rect x="1096" y="815" width="7" height="7" rx="1" fill="#9a9a9a"/><rect x="1097" y="816" width="5" height="3" fill="#e8c02c"/><ellipse cx="1099.5" cy="815.2" rx="3.5" ry="1.2" fill="#ddd"/><text x="1119" y="823.5" font-family="Liberation Sans" font-size="11" fill="#8b1a1a" text-anchor="middle">T</text><path d="M1100.5 825 V832" stroke="#111" stroke-width="1"/><path d="M1097.5 832.5 H1103.5 V838.5 L1102.5 837.5 L1100.5 836.5 L1098.5 837.5 L1097.5 838.5Z" fill="#f7893a" stroke="#111" stroke-width="1"/><path d="M1119.5 825 V832" stroke="#111" stroke-width="1"/><path d="M1116.5 832.5 H1122.5 V838.5 L1121.5 837.5 L1119.5 836.5 L1117.5 837.5 L1116.5 838.5Z" fill="#f7893a" stroke="#111" stroke-width="1"/><path d="M1028 801.5 H1035 M1041 801.5 H1056.5 V794.5 H1074" fill="none" stroke="#111" stroke-width="1"/><rect x="875.5" y="794.5" width="153" height="11.5" rx="6.25" fill="#c8c8ec" stroke="#555" stroke-width="1"/><rect x="875.5" y="794.5" width="13.5" height="11.5" rx="6.25" fill="none" stroke="#111" stroke-width="1.2"/><text x="882.3" y="805" font-family="Liberation Sans" font-size="11" font-weight="bold" fill="#111" text-anchor="middle">I</text><text x="894" y="805" font-family="Liberation Sans" font-size="11.6" font-weight="bold" fill="#111">Szene 3 speichern</text><circle cx="1022" cy="800.8" r="4.2" fill="#6e6e6e"/><rect x="1021.2" y="799.3" width="1.6" height="4" fill="#ddd"/><circle cx="1022" cy="798.0" r="0.9" fill="#ddd"/><path d="M1035.5 798.5 H1039 Q1041.5 798.5 1041.5 801.5 Q1041.5 804.5 1039 804.5 H1035.5Z" fill="#47b30f" stroke="#111" stroke-width="1"/></svg>
<div class="a" style="left:759px;top:986px;width:1150px;height:19px;background:#eeeeee"></div>
<svg style="left:764px;top:995px" width="7" height="4"><path d="M0 0 H7 L3.5 3.5Z" fill="#111"/></svg>
<svg style="left:781px;top:993px" width="9" height="9"><rect x="0.5" y="0.5" width="6" height="6" fill="none" stroke="#333"/><path d="M3 3 L8.5 8.5 M8.5 5 V8.5 H5" stroke="#333" fill="none"/></svg>
<svg style="left:799px;top:993px" width="8" height="8"><rect x="0" y="0" width="1.5" height="8" fill="#111"/><path d="M7.5 0 L2.5 4 L7.5 8Z" fill="#111"/></svg>
<svg style="left:819px;top:993px" width="5" height="8"><path d="M4.5 0 L0 4 L4.5 8Z" fill="#111"/></svg>
<svg style="left:838px;top:993px" width="5" height="8"><path d="M0 0 L4.5 4 L0 8Z" fill="#111"/></svg>
<svg style="left:854px;top:993px" width="8" height="8"><path d="M0 0 L5 4 L0 8Z" fill="#111"/><rect x="6" y="0" width="1.5" height="8" fill="#111"/></svg>
<div class="a" style="left:871px;top:986px;width:1038px;height:2px;background:#fff"></div>
<svg style="left:0;top:0" width="1920" height="1080"><path d="M871 988.5 H1909" stroke="#111" stroke-width="1"/><path d="M871 988.5 L878.5 1004.5 H934.5 L942 988.5Z" fill="#fff"/><path d="M939 988.5 L946.5 1004.5 H1005.5 L1013 988.5Z" fill="#fff"/><path d="M1010 988.5 L1017.5 1004.5 H1039.5 L1047 988.5Z" fill="#fff"/><path d="M1043 988.5 L1050.5 1004.5 H1107.5 L1115 988.5Z" fill="#fff"/><path d="M1112 988.5 L1119.5 1004.5 H1150.5 L1158 988.5Z" fill="#fff"/><path d="M1154 988.5 L1161.5 1004.5 H1188.5 L1196 988.5Z" fill="#fff"/><path d="M1189 988.5 L1196.5 1004.5 H1351.5 L1359 988.5Z" fill="#fff"/><path d="M1352 988.5 L1359.5 1004.5 H1432.5 L1440 988.5Z" fill="#fff"/><path d="M1437 988.5 L1444.5 1004.5 H1554.5 L1562 988.5Z" fill="#fff"/><path d="M871 988.5 L878.5 1004.5 H934.5 L942 988.5" fill="none" stroke="#111" stroke-width="1"/><path d="M939 988.5 L946.5 1004.5 H1005.5 L1013 988.5" fill="none" stroke="#111" stroke-width="1"/><path d="M1010 988.5 L1017.5 1004.5 H1039.5 L1047 988.5" fill="none" stroke="#111" stroke-width="1"/><path d="M1043 988.5 L1050.5 1004.5 H1107.5 L1115 988.5" fill="none" stroke="#111" stroke-width="1"/><path d="M1112 988.5 L1119.5 1004.5 H1150.5 L1158 988.5" fill="none" stroke="#111" stroke-width="1"/><path d="M1154 988.5 L1161.5 1004.5 H1188.5 L1196 988.5" fill="none" stroke="#111" stroke-width="1"/><path d="M1189 988.5 L1196.5 1004.5 H1351.5 L1359 988.5" fill="none" stroke="#111" stroke-width="1"/><path d="M1352 988.5 L1359.5 1004.5 H1432.5 L1440 988.5" fill="none" stroke="#111" stroke-width="1"/><path d="M1437 988.5 L1444.5 1004.5 H1554.5 L1562 988.5" fill="none" stroke="#111" stroke-width="1"/><path d="M1189 988.5 L1196.5 1004.5 H1351.5 L1359 988.5Z" fill="#fff"/><path d="M1189 987.5 L1196.5 1004.5 H1351.5 L1359 987.5" fill="none" stroke="#111" stroke-width="1"/></svg>
<div class="t" style="left:884px;top:990px;font-size:11px;color:#111">Deckblatt</div>
<div class="t" style="left:948px;top:990px;font-size:11px;color:#111">Außenlicht</div>
<div class="t" style="left:1017px;top:990px;font-size:11px;color:#111">Bad</div>
<div class="t" style="left:1052px;top:990px;font-size:11px;color:#111">Balkon OG</div>
<div class="t" style="left:1120px;top:990px;font-size:11px;color:#111">Büro</div>
<div class="t" style="left:1158px;top:990px;font-size:11px;color:#111">Gang</div>
<div class="t" style="left:1198px;top:990px;font-size:11.5px;font-weight:bold;color:#111">Indirektes Licht Wohnraum</div>
<div class="t" style="left:1365px;top:990px;font-size:11px;color:#111">Jalousien&nbsp; EG</div>
<div class="t" style="left:1455px;top:990px;font-size:11px;color:#111">Jalousie Wohnraum</div>
<div class="a" style="left:757px;top:1005px;width:1155px;height:3px;background:#fbd97a"></div>
<div class="a" style="left:8px;top:1009px;width:1904px;height:23px;background:#fff"></div>
<div class="a" style="left:12px;top:1012px;width:129px;height:21px;background:#f0f0f0;border:1px solid #c6c6c6;border-bottom:none"></div>
<svg style="left:16px;top:1015px" width="16" height="15"><rect x="0.5" y="5.5" width="11" height="9" fill="#f8f8f8" stroke="#777"/><path d="M2.5 9 H9.5 M2.5 11.5 H9.5" stroke="#999"/><path d="M2 6 L6 2 L9 4 L14 1" fill="none" stroke="#7cc143" stroke-width="2"/><path d="M12 0 L15.5 0 V4Z" fill="#7cc143"/></svg>
<div class="t" style="left:41px;top:1016px;color:#5e5e5e">Suchergebnisse</div>
<div class="a" style="left:140px;top:1012px;width:64px;height:21px;background:#f0f0f0;border:1px solid #c6c6c6;border-bottom:none"></div>
<svg style="left:144px;top:1015px" width="16" height="15"><rect x="0.5" y="5.5" width="11" height="9" fill="#f8f8f8" stroke="#777"/><path d="M2.5 9 H9.5 M2.5 11.5 H9.5" stroke="#999"/><path d="M2 6 L6 2 L9 4 L14 1" fill="none" stroke="#7cc143" stroke-width="2"/><path d="M12 0 L15.5 0 V4Z" fill="#7cc143"/></svg>
<div class="t" style="left:169px;top:1016px;color:#5e5e5e">EIB</div>
<div class="a" style="left:203px;top:1012px;width:62px;height:21px;background:#f0f0f0;border:1px solid #c6c6c6;border-bottom:none"></div>
<svg style="left:207px;top:1015px" width="16" height="15"><rect x="0.5" y="5.5" width="11" height="9" fill="#f8f8f8" stroke="#777"/><path d="M2.5 9 H9.5 M2.5 11.5 H9.5" stroke="#999"/><path d="M2 6 L6 2 L9 4 L14 1" fill="none" stroke="#7cc143" stroke-width="2"/><path d="M12 0 L15.5 0 V4Z" fill="#7cc143"/></svg>
<div class="t" style="left:232px;top:1016px;color:#5e5e5e">Air</div>
<div class="a" style="left:264px;top:1012px;width:94px;height:21px;background:#f0f0f0;border:1px solid #c6c6c6;border-bottom:none"></div>
<svg style="left:268px;top:1015px" width="16" height="15"><rect x="0.5" y="5.5" width="11" height="9" fill="#f8f8f8" stroke="#777"/><path d="M2.5 9 H9.5 M2.5 11.5 H9.5" stroke="#999"/><path d="M2 6 L6 2 L9 4 L14 1" fill="none" stroke="#7cc143" stroke-width="2"/><path d="M12 0 L15.5 0 V4Z" fill="#7cc143"/></svg>
<div class="t" style="left:293px;top:1016px;color:#5e5e5e">EnOcean</div>
<div class="a" style="left:357px;top:1012px;width:82px;height:21px;background:#f0f0f0;border:1px solid #c6c6c6;border-bottom:none"></div>
<svg style="left:361px;top:1015px" width="16" height="15"><rect x="0.5" y="5.5" width="11" height="9" fill="#f8f8f8" stroke="#777"/><path d="M2.5 9 H9.5 M2.5 11.5 H9.5" stroke="#999"/><path d="M2 6 L6 2 L9 4 L14 1" fill="none" stroke="#7cc143" stroke-width="2"/><path d="M12 0 L15.5 0 V4Z" fill="#7cc143"/></svg>
<div class="t" style="left:386px;top:1016px;color:#5e5e5e">1-Wire</div>
<div class="a" style="left:438px;top:1012px;width:101px;height:21px;background:#f0f0f0;border:1px solid #c6c6c6;border-bottom:none"></div>
<svg style="left:442px;top:1015px" width="16" height="15"><rect x="0.5" y="5.5" width="11" height="9" fill="#f8f8f8" stroke="#777"/><path d="M2.5 9 H9.5 M2.5 11.5 H9.5" stroke="#999"/><path d="M2 6 L6 2 L9 4 L14 1" fill="none" stroke="#7cc143" stroke-width="2"/><path d="M12 0 L15.5 0 V4Z" fill="#7cc143"/></svg>
<div class="t" style="left:467px;top:1016px;color:#5e5e5e">RS232/485</div>
<div class="a" style="left:538px;top:1012px;width:70px;height:21px;background:#f0f0f0;border:1px solid #c6c6c6;border-bottom:none"></div>
<svg style="left:542px;top:1015px" width="16" height="15"><rect x="0.5" y="5.5" width="11" height="9" fill="#f8f8f8" stroke="#777"/><path d="M2.5 9 H9.5 M2.5 11.5 H9.5" stroke="#999"/><path d="M2 6 L6 2 L9 4 L14 1" fill="none" stroke="#7cc143" stroke-width="2"/><path d="M12 0 L15.5 0 V4Z" fill="#7cc143"/></svg>
<div class="t" style="left:566px;top:1016px;color:#5e5e5e">UDP</div>
<div class="a" style="left:607px;top:1012px;width:58px;height:21px;background:#f0f0f0;border:1px solid #c6c6c6;border-bottom:none"></div>
<svg style="left:611px;top:1015px" width="16" height="15"><rect x="0.5" y="5.5" width="11" height="9" fill="#f8f8f8" stroke="#777"/><path d="M2.5 9 H9.5 M2.5 11.5 H9.5" stroke="#999"/><path d="M2 6 L6 2 L9 4 L14 1" fill="none" stroke="#7cc143" stroke-width="2"/><path d="M12 0 L15.5 0 V4Z" fill="#7cc143"/></svg>
<div class="t" style="left:636px;top:1016px;color:#5e5e5e">IR</div>
<div class="a" style="left:664px;top:1012px;width:68px;height:21px;background:#f0f0f0;border:1px solid #c6c6c6;border-bottom:none"></div>
<svg style="left:668px;top:1015px" width="16" height="15"><rect x="0.5" y="5.5" width="11" height="9" fill="#f8f8f8" stroke="#777"/><path d="M2.5 9 H9.5 M2.5 11.5 H9.5" stroke="#999"/><path d="M2 6 L6 2 L9 4 L14 1" fill="none" stroke="#7cc143" stroke-width="2"/><path d="M12 0 L15.5 0 V4Z" fill="#7cc143"/></svg>
<div class="t" style="left:693px;top:1016px;color:#5e5e5e">Log</div>
<div class="a" style="left:7px;top:1032px;width:1906px;height:1px;background:#1a7fd4"></div>
<div class="a" style="left:0;top:1033px;width:1920px;height:7px;background:#0c0c0c"></div>
<div class="a" style="left:1560px;top:948px;width:360px;height:80px;background:#1f1f1f"></div>
<svg style="left:1575px;top:962px" width="26" height="28" viewBox="0 0 26 28"><path d="M6.5 1.0 L13.0 6.5 L6.5 12.0 L0.0 6.5Z M19.5 1.0 L26.0 6.5 L19.5 12.0 L13.0 6.5Z M6.5 9.0 L13.0 14.5 L6.5 20.0 L0.0 14.5Z M19.5 9.0 L26.0 14.5 L19.5 20.0 L13.0 14.5Z " fill="#fff" stroke="#000" stroke-width="0.8"/><path d="M13 6.5 L19.5 10.5 L13 14.5 L6.5 10.5Z" fill="#1f1f1f" stroke="#000" stroke-width="0.8"/><path d="M4.5 20 L13 14.5 L21.5 20 V21.5 L13 27 L4.5 21.5Z" fill="#fff" stroke="#000" stroke-width="0.8"/></svg>
<div class="t" style="left:1615px;top:959px;font-size:14px;font-weight:bold;color:#fff;line-height:16px">Screenshot wurde hinzugefügt</div>
<div class="t" style="left:1615px;top:979px;font-size:14.8px;color:#a6a6a6;line-height:16px">Ein Screenshot wurde Ihrer Dropbox</div>
<div class="t" style="left:1615px;top:999px;font-size:14.8px;color:#a6a6a6;line-height:16px">hinzugefügt.</div>
<!-- taskbar -->
<div class="a" style="left:0;top:1040px;width:1920px;height:40px;background:#000"></div>
<svg style="left:16px;top:1052px" width="17" height="17"><path d="M0 2.3 L7 1.3 V7.7 H0Z M8 1.2 L17 0 V7.7 H8Z M0 8.7 H7 V15.2 L0 14.2Z M8 8.7 H17 V16.5 L8 15.3Z" fill="#fff"/></svg>
<svg style="left:62px;top:1053px" width="21" height="14"><rect x="4.5" y="0.5" width="12" height="13" fill="none" stroke="#fff"/><path d="M2.5 2.5 H0.5 V11.5 H2.5 M18.5 2.5 H20.5 V11.5 H18.5" fill="none" stroke="#fff"/></svg>
<svg style="left:111px;top:1051px" width="22" height="18"><path d="M0 2 H8 L10 4 H22 V18 H0Z" fill="#f5c842"/><rect x="0" y="6" width="22" height="8" fill="#fbd862"/><path d="M5 11 H17 V18 H14 V14 H8 V18 H5Z" fill="#2ba7e8"/></svg>
<svg style="left:160px;top:1049px" width="23" height="23" viewBox="-11.5 -11.5 23 23"><circle r="11" fill="#db4437"/><path d="M0 0 L9.5 -5.5 A11 11 0 0 1 0 11Z" fill="#fcc934"/><path d="M0 0 L0 11 A11 11 0 0 1 -9.5 -5.5Z" fill="#1e9e50"/><circle r="5" fill="#fff"/><circle r="4" fill="#4285f4"/></svg>
<svg style="left:209px;top:1048px" width="23" height="23"><path d="M0 3 L13 0 V23 L0 20Z" fill="#0a64c4"/><ellipse cx="6.5" cy="11.5" rx="3.5" ry="4.5" fill="none" stroke="#fff" stroke-width="2"/><rect x="13" y="6" width="10" height="11" fill="#1a78d8"/><path d="M13 6 L18 12 L23 6" fill="none" stroke="#fff" stroke-width="1.5"/></svg>
<div class="a" style="left:257px;top:1048px;width:24px;height:24px;background:#0a78d7"></div>
<svg style="left:261px;top:1052px" width="16" height="16" viewBox="-8 -8 16 16"><g fill="#fff"><circle r="5"/><rect x="-1.5" y="-7.5" width="3" height="15"/><rect x="-7.5" y="-1.5" width="15" height="3"/><rect x="-1.5" y="-7.5" width="3" height="15" transform="rotate(45)"/><rect x="-1.5" y="-7.5" width="3" height="15" transform="rotate(-45)"/></g><circle r="2.3" fill="#0a78d7"/></svg>
<div class="a" style="left:294px;top:1040px;width:48px;height:40px;background:#3a3a3a"></div>
<svg style="left:305px;top:1048px" width="25" height="23" viewBox="0 0 25 23"><path d="M1.5 11 L12.5 2 L23.5 11" fill="none" stroke="#7ab42c" stroke-width="3"/><path d="M5 12 L12.5 6 L20 12 V22 H15 V17 H10 V22 H5Z" fill="#5a5a5a"/></svg>
<div class="a" style="left:102px;top:1078px;width:40px;height:2px;background:#79b8ec"></div>
<div class="a" style="left:249px;top:1078px;width:40px;height:2px;background:#79b8ec"></div>
<div class="a" style="left:294px;top:1078px;width:48px;height:2px;background:#79b8ec"></div>
<svg style="left:1690px;top:1056px" width="13" height="8"><path d="M0.7 7.3 L6.5 1.2 L12.3 7.3" fill="none" stroke="#fff" stroke-width="1.2"/></svg>
<svg style="left:1713px;top:1053px" width="15" height="15" viewBox="0 0 15 15"><path d="M4 0.5 L7.5 2.7 L4 5 L0.5 2.7Z M11 0.5 L14.5 2.7 L11 5 L7.5 2.7Z M4 5.2 L7.5 7.5 L4 9.7 L0.5 7.5Z M11 5.2 L14.5 7.5 L11 9.7 L7.5 7.5Z M4 10.5 L7.5 8.3 L11 10.5 L7.5 12.7Z" fill="#fff"/><circle cx="11" cy="11" r="3.6" fill="#1a8ae6"/><path d="M9.3 11 A1.8 1.8 0 0 1 12.7 10.5" stroke="#fff" fill="none" stroke-width="0.9"/></svg>
<svg style="left:1736px;top:1053px" width="17" height="14"><path d="M0.5 4.5 H3.5 L7.5 0.8 V13.2 L3.5 9.5 H0.5Z" fill="none" stroke="#fff"/><path d="M10 4.5 Q11.5 7 10 9.5 M12.3 2.8 Q14.8 7 12.3 11.2 M14.6 1 Q18 7 14.6 13" fill="none" stroke="#fff"/></svg>
<svg style="left:1760px;top:1054px" width="17" height="14"><rect x="4.5" y="2.5" width="11.5" height="8" fill="none" stroke="#fff"/><path d="M10 10.5 V13 M7 13.5 H13" stroke="#fff"/><rect x="0.5" y="0.5" width="3.5" height="3.5" fill="none" stroke="#fff"/><path d="M2.25 4 V13" stroke="#fff"/></svg>
<svg style="left:1784px;top:1052px" width="16" height="17"><path d="M0 0 H16 V13 H10 L8 15.5 L6 13 H0Z" fill="#fff"/><path d="M3 3.5 H13 M3 6.5 H13 M3 9.5 H10" stroke="#000" stroke-width="1.1"/></svg>
<div class="t" style="left:1811px;top:1053px;font-size:11px;color:#fff">DEU</div>
<div class="t" style="left:1864px;top:1044px;font-size:11.3px;color:#fff">20:22</div>
<div class="t" style="left:1849px;top:1060px;font-size:11px;color:#fff">20.10.2015</div>
<div class="a" style="left:1915px;top:1040px;width:1px;height:40px;background:#555"></div>
</body></html>
